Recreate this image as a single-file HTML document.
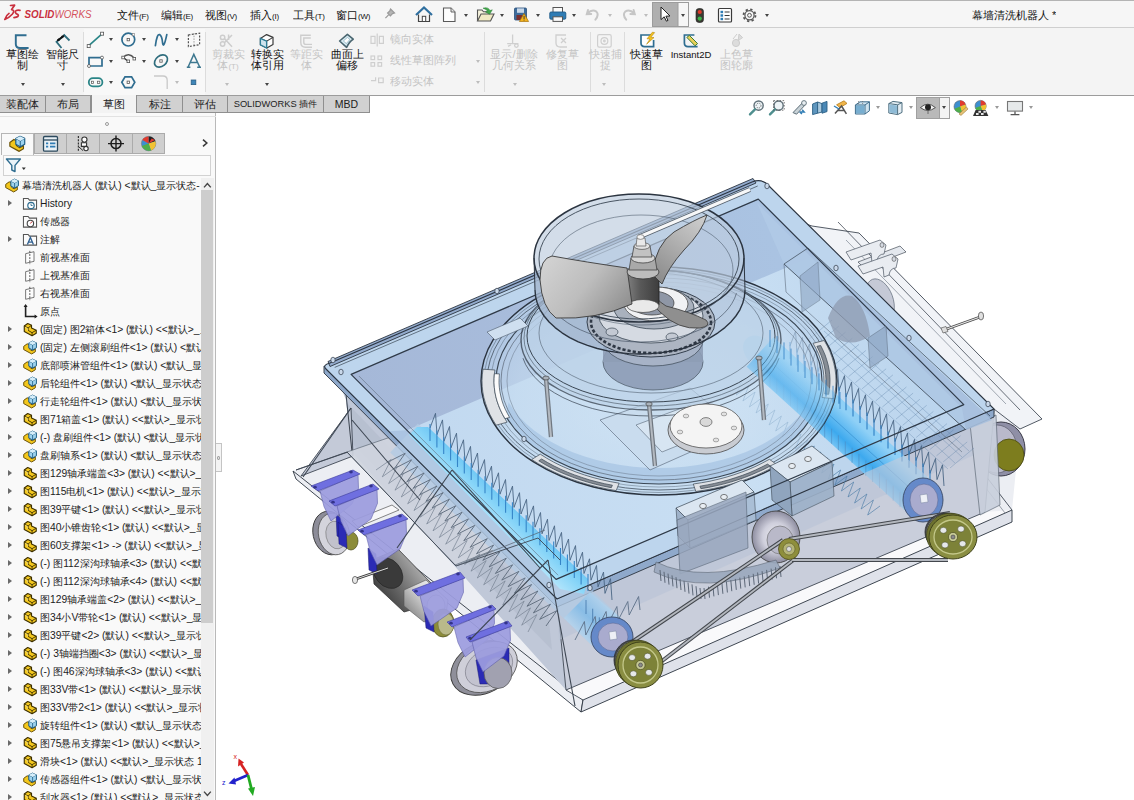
<!DOCTYPE html>
<html lang="zh">
<head>
<meta charset="utf-8">
<title>SOLIDWORKS</title>
<style>
*{box-sizing:border-box;margin:0;padding:0}
html,body{width:1134px;height:800px;overflow:hidden;background:#fff;font-family:"Liberation Sans",sans-serif;color:#1a1a1a}
#app{position:relative;width:1134px;height:800px;overflow:hidden;background:#fff}
.abs{position:absolute}
#topbar{position:absolute;left:0;top:0;width:1134px;height:28px;background:#f6f6f6;border-top:1px solid #b4b4b4;border-bottom:1px solid #cfcfcf}
#ribbon{position:absolute;left:0;top:28px;width:1134px;height:68px;background:#f4f4f4;border-bottom:1px solid #9c9c9c}
.sep{position:absolute;top:32px;width:1px;height:60px;background:#dcdcdc}
.tab{position:absolute;top:96px;height:17px;background:#d1d1d1;border-right:1px solid #8f8f8f;border-bottom:1px solid #8f8f8f;font-size:10.5px;line-height:16px;text-align:center;color:#222;white-space:nowrap;overflow:hidden}
.tab.act{background:#f3f3f3;border-bottom:none;top:95px;height:19px;line-height:18px;border-left:1px solid #8f8f8f}
.menu{position:absolute;top:8px;height:14px;font-size:11px;line-height:14px;color:#111;white-space:nowrap;overflow:hidden}
.menu i{font-style:normal;font-size:8px;letter-spacing:-0.2px}
.rl{position:absolute;font-size:11px;line-height:11px;height:11px;text-align:center;color:#111;white-space:nowrap;overflow:hidden}
.rl.dis{color:#c4c4c4}
.dd{position:absolute;width:0;height:0;border-left:2.5px solid transparent;border-right:2.5px solid transparent;border-top:3px solid #444}
.dd.dis{border-top-color:#bdbdbd}
.ico{position:absolute;overflow:visible}
#left{position:absolute;left:0;top:113px;width:216px;height:687px;background:#f9f9f9;border-right:1px solid #b9b9b9}
.row{position:absolute;left:0;width:201px;height:18px;font-size:10.3px;line-height:18px;white-space:nowrap;overflow:hidden;color:#1c1c1c}
.row b{position:absolute;left:40px;top:0;font-weight:normal}
.arr{position:absolute;left:8px;top:5px;width:0;height:0;border-top:3.5px solid transparent;border-bottom:3.5px solid transparent;border-left:4px solid #6a6a6a}
</style>
</head>
<body>
<div id="app">
<div id="topbar"></div>
<div id="ribbon"></div>
<!-- logo -->
<svg class="ico" style="left:0;top:0" width="100" height="28" viewBox="0 0 100 28">
 <g fill="none" stroke="#c9303e" stroke-width="1.7" stroke-linecap="round" stroke-linejoin="round">
  <path d="M10.5 5.5 L14.6 5.2 L11.6 9.6 Q15.5 10.2 12.2 14.2 Q9 17.8 4.8 19.4 Q6.2 15.2 9 13.4"/>
  <path d="M20 10.3 Q15 9.6 15.3 12.3 Q15.7 14 18 14.6 Q19.6 16.8 14 17.6"/>
 </g>
 <text x="24.5" y="18.4" font-family="Liberation Sans, sans-serif" font-size="10.4" font-style="italic" fill="#c9303e" textLength="67" lengthAdjust="spacingAndGlyphs"><tspan font-weight="bold">SOLID</tspan><tspan fill="#d4525c">WORKS</tspan></text>
</svg>
<div class="menu" style="left:117px;width:33px">文件<i>(F)</i></div>
<div class="menu" style="left:161px;width:33px">编辑<i>(E)</i></div>
<div class="menu" style="left:205px;width:34px">视图<i>(V)</i></div>
<div class="menu" style="left:250px;width:30px">插入<i>(I)</i></div>
<div class="menu" style="left:293px;width:32px">工具<i>(T)</i></div>
<div class="menu" style="left:336px;width:37px">窗口<i>(W)</i></div>
<div class="menu" style="left:972px;width:84px">幕墙清洗机器人 *</div>
<svg class="ico" style="left:380px;top:0" width="400" height="28" viewBox="380 0 400 28">
 <!-- pin -->
 <g stroke="#9a9a9a" stroke-width="1.2" fill="#b5b5b5"><path d="M390.5 9 L394.5 13 L392.5 13.6 L390.4 15.8 L387.6 13 L389.8 10.9 Z"/><path d="M388.8 14.6 L385.4 18.2" fill="none"/></g>
 <!-- home -->
 <path d="M416 15 L424 7.5 L432 15" fill="none" stroke="#2f6f9f" stroke-width="2.2" stroke-linejoin="miter"/>
 <path d="M418.5 14.5 V21.5 H429.5 V14.5" fill="#f4f4f4" stroke="#444" stroke-width="1.2"/>
 <rect x="422.3" y="16.3" width="3.4" height="5.2" fill="#fff" stroke="#444" stroke-width="1"/>
 <!-- new -->
 <path d="M443.5 8 H451 L455 12 V21.5 H443.5 Z" fill="#fdfdfd" stroke="#5a5a5a" stroke-width="1.1"/>
 <path d="M451 8 V12 H455" fill="#e4e4e4" stroke="#5a5a5a" stroke-width="0.9"/>
 <!-- open -->
 <path d="M477.5 21 V10 H482 L483.5 11.8 H489 V14" fill="#f5f2dc" stroke="#555" stroke-width="1.1"/>
 <path d="M477.5 21 L481 14 H494 L490.5 21 Z" fill="#efe9c4" stroke="#555" stroke-width="1.1"/>
 <path d="M483 8.2 Q488 6.5 490 10.5 L492.3 9.8 L489.6 14.3 L485.4 11.9 L487.6 11.2 Q486.5 9.2 483 8.2 Z" fill="#3fa84a" stroke="#2b7d33" stroke-width="0.5"/>
 <!-- save -->
 <rect x="514.5" y="8" width="12" height="12" rx="1" fill="#3d6c9c" stroke="#2a4f78" stroke-width="0.8"/>
 <rect x="517" y="8.4" width="7" height="4.4" fill="#c9d8e8"/>
 <rect x="516.5" y="15" width="6" height="5" fill="#7a2f2f"/>
 <path d="M524 13.5 L528.6 21.5 H519.4 Z" fill="#f3b21c" stroke="#a8720b" stroke-width="0.7"/>
 <rect x="523.6" y="16" width="0.9" height="3" fill="#333"/><rect x="523.6" y="19.6" width="0.9" height="0.9" fill="#333"/>
 <!-- print -->
 <rect x="553" y="7.5" width="9.5" height="5" fill="#fafafa" stroke="#555" stroke-width="1"/>
 <rect x="549.8" y="12" width="16" height="7.2" rx="1.2" fill="#2f7cb4" stroke="#1d5a88" stroke-width="0.9"/>
 <rect x="553" y="16.8" width="9.5" height="4.6" fill="#fafafa" stroke="#555" stroke-width="1"/>
 <!-- undo / redo disabled -->
 <path d="M588 10 L586.8 14.2 L591.2 14 M587.4 13.6 Q592 8.6 596.4 11.6 Q599.4 14.6 595.4 19.6" fill="none" stroke="#c6c6c6" stroke-width="2" stroke-linecap="round"/>
 <path d="M633.6 10 L634.8 14.2 L630.4 14 M634.2 13.6 Q629.6 8.6 625.2 11.6 Q622.2 14.6 626.2 19.6" fill="none" stroke="#c6c6c6" stroke-width="2" stroke-linecap="round"/>
 <!-- select -->
 <rect x="652.5" y="2.5" width="36" height="24" fill="#f6f6f6" stroke="#9c9c9c" stroke-width="1"/>
 <rect x="652.5" y="2.5" width="25.5" height="24" fill="#afafaf" stroke="#9c9c9c" stroke-width="1"/>
 <path d="M661 7 V19.6 L664.2 16.8 L666.4 21.2 L668 20.4 L665.9 16.2 L670 16 Z" fill="#fff" stroke="#222" stroke-width="1"/>
 <!-- traffic light -->
 <rect x="696" y="8.5" width="7.5" height="14" rx="3" fill="#3a3a32" stroke="#222" stroke-width="0.6"/>
 <circle cx="699.75" cy="12" r="2.1" fill="#e03a2a"/><circle cx="699.75" cy="18.6" r="2.1" fill="#3eb44a"/>
 <!-- options list -->
 <rect x="718.5" y="8.5" width="13" height="13.5" rx="1" fill="#fff" stroke="#3a3a3a" stroke-width="1.2"/>
 <rect x="720.5" y="10.8" width="2.6" height="2.4" fill="#2f7cb4"/><rect x="720.5" y="14.3" width="2.6" height="2.4" fill="#2f7cb4"/><rect x="720.5" y="17.8" width="2.6" height="2.4" fill="#2f7cb4"/>
 <path d="M724.6 12 H729.6 M724.6 15.5 H729.6 M724.6 19 H729.6" stroke="#3a3a3a" stroke-width="1.1"/>
 <!-- gear -->
 <circle cx="749.5" cy="15.3" r="4.6" fill="none" stroke="#555" stroke-width="1.2"/>
 <circle cx="749.5" cy="15.3" r="6" fill="none" stroke="#555" stroke-width="1.8" stroke-dasharray="2.3 2.41"/>
 <circle cx="749.5" cy="15.3" r="1.9" fill="none" stroke="#555" stroke-width="1"/>
</svg>
<div class="dd" style="left:464px;top:14px"></div>
<div class="dd" style="left:500px;top:14px"></div>
<div class="dd" style="left:536px;top:14px"></div>
<div class="dd" style="left:572px;top:14px"></div>
<div class="dd dis" style="left:608px;top:14px"></div>
<div class="dd dis" style="left:644px;top:14px"></div>
<div class="dd" style="left:680.5px;top:14px"></div>
<div class="dd" style="left:765px;top:14px"></div>
<div class="abs" style="left:84px;top:29px;width:121px;height:66px;background:#f8f8f8"></div>
<div class="sep" style="left:83px"></div><div class="sep" style="left:205px"></div><div class="sep" style="left:484px"></div><div class="sep" style="left:590px"></div><div class="sep" style="left:624px"></div>
<div class="rl" style="left:5px;top:49px;width:34px">草图绘</div><div class="rl" style="left:5px;top:60px;width:34px">制</div>
<div class="rl" style="left:45px;top:49px;width:34px">智能尺</div><div class="rl" style="left:45px;top:60px;width:34px">寸</div>
<div class="rl dis" style="left:211px;top:49px;width:34px">剪裁实</div><div class="rl dis" style="left:211px;top:60px;width:34px">体<span style="font-size:8px">(T)</span></div>
<div class="rl" style="left:250px;top:49px;width:34px">转换实</div><div class="rl" style="left:250px;top:60px;width:34px">体引用</div>
<div class="rl dis" style="left:289px;top:49px;width:34px">等距实</div><div class="rl dis" style="left:289px;top:60px;width:34px">体</div>
<div class="rl" style="left:330px;top:49px;width:34px">曲面上</div><div class="rl" style="left:330px;top:60px;width:34px">偏移</div>
<div class="rl dis" style="left:390px;top:34px;width:44px;text-align:left">镜向实体</div>
<div class="rl dis" style="left:390px;top:55px;width:66px;text-align:left">线性草图阵列</div>
<div class="rl dis" style="left:390px;top:76px;width:44px;text-align:left">移动实体</div>
<div class="rl dis" style="left:488px;top:49px;width:52px">显示/删除</div><div class="rl dis" style="left:488px;top:60px;width:52px">几何关系</div>
<div class="rl dis" style="left:544px;top:49px;width:36px">修复草</div><div class="rl dis" style="left:544px;top:60px;width:36px">图</div>
<div class="rl dis" style="left:588px;top:49px;width:34px">快速捕</div><div class="rl dis" style="left:588px;top:60px;width:34px">捉</div>
<div class="rl" style="left:629px;top:49px;width:34px">快速草</div><div class="rl" style="left:629px;top:60px;width:34px">图</div>
<div class="rl" style="left:668px;top:49px;width:46px;font-size:9.5px">Instant2D</div>
<div class="rl dis" style="left:719px;top:49px;width:34px">上色草</div><div class="rl dis" style="left:719px;top:60px;width:34px">图轮廓</div>
<div class="dd" style="left:20.5px;top:83px"></div><div class="dd" style="left:60.5px;top:83px"></div>
<div class="dd dis" style="left:224.5px;top:83px"></div><div class="dd" style="left:265px;top:83px"></div>
<div class="dd dis" style="left:513px;top:83px"></div><div class="dd dis" style="left:601.5px;top:83px"></div>
<div class="dd dis" style="left:476px;top:60px"></div><div class="dd dis" style="left:476px;top:81px"></div>
<div class="dd" style="left:109px;top:38px"></div><div class="dd" style="left:109px;top:59.5px"></div><div class="dd" style="left:109px;top:80.5px"></div>
<div class="dd" style="left:141.5px;top:38px"></div><div class="dd" style="left:141.5px;top:59.5px"></div>
<div class="dd" style="left:174.5px;top:38px"></div><div class="dd" style="left:174.5px;top:59.5px"></div><div class="dd dis" style="left:174.5px;top:80.5px"></div>
<svg class="ico" style="left:0;top:28px" width="780" height="68" viewBox="0 28 780 68">
 <!-- sketch -->
 <path d="M26.5 35.2 H15.8 V44 Q15.8 48 20 48 H28.6" fill="none" stroke="#2f6d90" stroke-width="1.9"/>
 <!-- smart dimension -->
 <path d="M65 35 L56.5 41.8 L61.5 48" fill="none" stroke="#2f6d7d" stroke-width="1.8"/>
 <path d="M63.5 34.5 L69.5 40.5" fill="none" stroke="#2f6d7d" stroke-width="1.8"/>
 <path d="M57.5 40.5 L63.5 36" stroke="#111" stroke-width="1.6"/><path d="M56.6 41.2 l3.4 -0.6 l-1.7 -2.3 z M64.4 35.3 l-3.4 0.6 l1.7 2.3 z" fill="#111"/>
 <!-- line -->
 <path d="M88.8 45.6 L102 33.8" stroke="#2a8587" stroke-width="1.6"/><rect x="87.2" y="44.6" width="3" height="3" fill="#fff" stroke="#555" stroke-width="0.8"/><rect x="100.6" y="32.2" width="3" height="3" fill="#fff" stroke="#555" stroke-width="0.8"/>
 <!-- rect -->
 <path d="M89 66 V57.6 H102 V66 Z" fill="none" stroke="#2f6d90" stroke-width="1.7"/><circle cx="89" cy="66" r="1.5" fill="#fff" stroke="#555" stroke-width="0.8"/><circle cx="102" cy="57.6" r="1.5" fill="#fff" stroke="#555" stroke-width="0.8"/>
 <!-- slot -->
 <rect x="88.8" y="78.2" width="13.6" height="8.2" rx="4.1" fill="none" stroke="#2a8587" stroke-width="1.8"/><rect x="91.4" y="81.2" width="2.2" height="2.2" fill="#fff" stroke="#555" stroke-width="0.7"/><rect x="97.6" y="81.2" width="2.2" height="2.2" fill="#fff" stroke="#555" stroke-width="0.7"/>
 <!-- circle -->
 <circle cx="128.3" cy="39.6" r="6.4" fill="none" stroke="#2f6d90" stroke-width="1.7"/><rect x="127.1" y="38.4" width="2.4" height="2.4" fill="#fff" stroke="#555" stroke-width="0.8"/><rect x="132.2" y="33.6" width="2.2" height="2.2" fill="#fff" stroke="#777" stroke-width="0.6"/>
 <!-- arc -->
 <path d="M123 57.6 Q128.5 51.6 134.6 58.4" fill="none" stroke="#555" stroke-width="1.5"/><path d="M123.4 57.4 L128 61.2" stroke="#333" stroke-width="1.3"/><rect x="121.8" y="56.2" width="2.6" height="2.6" fill="#fff" stroke="#555" stroke-width="0.8"/><rect x="127" y="60" width="2.6" height="2.6" fill="#fff" stroke="#555" stroke-width="0.8"/><rect x="133" y="57.4" width="2.6" height="2.6" fill="#fff" stroke="#555" stroke-width="0.8"/>
 <!-- hexagon -->
 <path d="M121.8 82.3 L125 76.9 H131.6 L134.8 82.3 L131.6 87.7 H125 Z" fill="none" stroke="#2f6d90" stroke-width="1.7"/><rect x="127.1" y="81.1" width="2.4" height="2.4" fill="#fff" stroke="#555" stroke-width="0.8"/>
 <!-- spline -->
 <path d="M155.4 45.6 Q157 33.6 159.6 34.6 Q162 36 162.6 43 Q163.6 49.6 166.8 34.6" fill="none" stroke="#2f6d90" stroke-width="1.7" stroke-linecap="round"/>
 <!-- ellipse -->
 <ellipse cx="161" cy="61" rx="7.2" ry="5.2" transform="rotate(-38 161 61)" fill="none" stroke="#2f6d7d" stroke-width="1.7"/><rect x="159.8" y="59.8" width="2.4" height="2.4" fill="#fff" stroke="#555" stroke-width="0.8"/>
 <!-- fillet disabled -->
 <path d="M154 76 H163 Q167.2 76 167.2 80.4 V89" fill="none" stroke="#c9c9c9" stroke-width="1.3"/>
 <!-- construction -->
 <path d="M188.4 35 L199.6 33.2 V44.6 L188.4 46.6 Z" fill="none" stroke="#555" stroke-width="1.2" stroke-dasharray="2 1.4"/><path d="M194 33 V47" stroke="#888" stroke-width="0.8" stroke-dasharray="1.5 1.2"/>
 <!-- text A -->
 <path d="M188 67.2 L193.8 54.4 L199.8 67.2 M190.4 62.6 H197.2 M186.8 67.2 H190.4 M197.2 67.2 H201" fill="none" stroke="#3e7890" stroke-width="1.5"/>
 <!-- point -->
 <rect x="191.2" y="80" width="4.6" height="4.6" fill="#3f86b8" stroke="#2a5f85" stroke-width="0.8"/>
 <!-- trim disabled -->
 <g fill="none" stroke="#cdcdcd" stroke-width="1.5"><circle cx="222.6" cy="37.4" r="2.2"/><circle cx="222.6" cy="44" r="2.2"/><path d="M224.6 38.8 L232 46.8 M224.6 42.6 L232 35 M228.6 34.6 V40"/></g>
 <!-- convert cube -->
 <path d="M260.4 38.4 L266.6 34.6 L273 37.4 V44.4 L266.8 48 L260.4 44.8 Z" fill="#fdfdfd" stroke="#3a3a3a" stroke-width="1.2" stroke-linejoin="round"/>
 <path d="M260.4 38.4 L266.6 41.2 L273 37.4 M266.6 41.2 V48" fill="none" stroke="#3a3a3a" stroke-width="1.1"/>
 <path d="M260.4 38.4 L266.6 41.2 V48 L260.4 44.8 Z" fill="#cfe4ee" stroke="#2f7d96" stroke-width="1.3"/>
 <!-- offset disabled -->
 <path d="M310.8 35.2 H300.8 V42.6 Q300.8 47.2 305.4 47.2 H312 M310.8 38 H303.8 V42.4 Q303.8 44.4 306 44.4 H312" fill="none" stroke="#cdcdcd" stroke-width="1.4"/>
 <!-- surface offset -->
 <path d="M339.6 41 L347.4 34.4 L353.2 39.2 Q349.4 41.4 346.6 47.4 Z" fill="#d9ecf3" stroke="#4a6670" stroke-width="1.6" stroke-linejoin="round"/>
 <path d="M343.4 41 L347.4 37.4 L350 39.6 Q348 41 346.4 43.6 Z" fill="#fff" stroke="#7fa9b8" stroke-width="0.7"/>
 <!-- mirror / pattern / move (disabled) -->
 <g fill="none" stroke="#cfcfcf" stroke-width="1.2"><path d="M371 36.4 h4 v7 h-4 z M379.4 36.4 h4 v7 h-4 z M377.2 33.4 V46.4"/>
 <rect x="371" y="56" width="3.6" height="3.6"/><rect x="378" y="56" width="3.6" height="3.6"/><rect x="371" y="62.6" width="3.6" height="3.6"/><rect x="378" y="62.6" width="3.6" height="3.6"/>
 <path d="M371 80.6 h4.6 v-3.4 M378.6 78 h4.6 v4.6 h-4.6 z"/></g>
 <!-- display/delete relations disabled -->
 <g fill="none" stroke="#cfcfcf" stroke-width="1.3"><path d="M512.6 34.4 V43.4 M507.2 43.6 H518.4"/><circle cx="516.4" cy="45.6" r="1.8"/><path d="M508 46.4 l3 -1.6"/></g>
 <!-- repair sketch disabled -->
 <g fill="none" stroke="#cfcfcf" stroke-width="1.3"><path d="M566 35 H556 V43 Q556 47 560.4 47 H567"/><path d="M561 38 l5 5 M566 38 l-5 5"/></g>
 <!-- quick snaps disabled -->
 <g fill="none" stroke="#cfcfcf" stroke-width="1.2"><rect x="597.6" y="34.6" width="13.6" height="12.6" rx="1.6"/><circle cx="604.4" cy="41" r="3.4"/><circle cx="604.4" cy="41" r="0.8"/></g>
 <!-- rapid sketch -->
 <path d="M651 35 H641 V43 Q641 46.6 644.6 46.6 H653.6 V40" fill="#fff" stroke="#2f6d90" stroke-width="1.7"/>
 <path d="M652.4 32.2 L647 38.8 L650 39 L646.6 44.2 L654 37.6 L650.8 37.2 L654.6 32.6 Z" fill="#f4c21f" stroke="#b58508" stroke-width="0.6"/>
 <!-- instant2d -->
 <path d="M694.4 35 H684.4 V43 Q684.4 46.6 688 46.6 H697.6" fill="none" stroke="#2f6d90" stroke-width="1.7"/>
 <path d="M686.8 37.4 L689.4 35.4 L697.6 43.6 L695 45.8 Z" fill="#e9cf57" stroke="#3a7d3a" stroke-width="1"/>
 <!-- shaded sketch contours disabled -->
 <g fill="#dcdcdc" stroke="#cdcdcd" stroke-width="1"><circle cx="736" cy="43" r="3.6"/><path d="M739 34 l3.6 3.6 l-4.4 3 z"/><path d="M733 39 l4 -5"/></g>
</svg>
<div class="tab" style="left:0;width:46px">装配体</div>
<div class="tab" style="left:46px;width:45px">布局</div>
<div class="tab act" style="left:91px;width:46px">草图</div>
<div class="tab" style="left:137px;width:46px">标注</div>
<div class="tab" style="left:183px;width:45px">评估</div>
<div class="tab" style="left:228px;width:96px;font-size:9.3px">SOLIDWORKS 插件</div>
<div class="tab" style="left:324px;width:46px">MBD</div>
<svg class="ico" style="left:740px;top:94px" width="300" height="30" viewBox="740 94 300 30">
 <!-- zoom to fit -->
 <circle cx="758.6" cy="105.6" r="4.6" fill="#eef4f7" stroke="#5f6f78" stroke-width="1.4"/><path d="M755 109.4 L750 114.4" stroke="#4f8f8f" stroke-width="2.4" stroke-linecap="round"/><circle cx="758.6" cy="105.6" r="2.4" fill="none" stroke="#444" stroke-width="0.8" stroke-dasharray="1 1.2"/>
 <!-- zoom area -->
 <circle cx="778.6" cy="105.6" r="4.6" fill="#eef4f7" stroke="#5f6f78" stroke-width="1.4"/><path d="M775 109.4 L770 114.4" stroke="#4f8f8f" stroke-width="2.4" stroke-linecap="round"/><rect x="773.6" y="100.6" width="10.6" height="9.6" fill="none" stroke="#555" stroke-width="0.8" stroke-dasharray="1.5 1.5"/>
 <!-- previous view -->
 <path d="M793 112.6 L803.6 101.6 L806 104 L796.6 114.2 Z" fill="#c9d3d8" stroke="#5f6f78" stroke-width="1"/><circle cx="804" cy="103" r="2.4" fill="#e8eef1" stroke="#5f6f78" stroke-width="0.9"/><path d="M799.6 112 l4.6 0 l-2 -2.2 M799.6 112 l2.4 2" fill="none" stroke="#2f7cb4" stroke-width="1.4"/>
 <!-- section view -->
 <path d="M812.6 104 L817.6 102 V113.2 L812.6 114.6 Z" fill="#5f96be" stroke="#2a5f85" stroke-width="0.9"/><path d="M817.6 102 L822 103.6 V112 L817.6 113.2 Z" fill="#a9c9de" stroke="#2a5f85" stroke-width="0.9"/><path d="M822 103.2 L827 101.4 V111.6 L822 113.2 Z" fill="#4a88b6" stroke="#2a5f85" stroke-width="0.9"/>
 <!-- dynamic annotation -->
 <path d="M836.6 104.8 L844 100.8 L847 103.4 L840 107.6 Z" fill="#f0b54a" stroke="#b57b1a" stroke-width="0.8"/><path d="M835 113.6 L841.6 106 L846.4 113.8 M838 110.4 H844.4" fill="none" stroke="#555" stroke-width="1.5"/><path d="M834 106 L839 109" stroke="#2f7cb4" stroke-width="1.4"/>
 <!-- view orientation -->
 <path d="M855.4 105 L860 101.8 H869.4 V110.8 L865 114 H855.4 Z" fill="#cfe3ef" stroke="#3e6d8c" stroke-width="1"/><path d="M855.4 105 H865 V114 M865 105 L869.4 101.8" fill="none" stroke="#3e6d8c" stroke-width="1"/><rect x="856" y="105.6" width="8.4" height="7.8" fill="#78aed0"/><path d="M858.6 101 V104.6 M862.6 101 V104.6" stroke="#666" stroke-width="0.7" stroke-dasharray="1 1"/>
 <!-- display style -->
 <path d="M888.8 103.6 L893 101.4 L902 102.6 V112.4 L897.6 114.6 L888.8 113 Z" fill="#e3edf3" stroke="#4f6f80" stroke-width="1"/><path d="M888.8 103.6 L897.6 104.8 V114.6 M897.6 104.8 L902 102.6" fill="none" stroke="#4f6f80" stroke-width="1"/><path d="M889.4 104.4 L897 105.4 V113.8 L889.4 112.4 Z" fill="#8fbbd6"/>
 <!-- hide/show box -->
 <rect x="916.5" y="97.5" width="33" height="21" fill="#f3f3f3" stroke="#a0a0a0" stroke-width="1"/><rect x="916.5" y="97.5" width="23" height="21" fill="#b9b9b9" stroke="#a0a0a0" stroke-width="1"/>
 <path d="M920.4 107.6 Q927.6 100.8 935.4 107.6 Q927.6 113.4 920.4 107.6 Z" fill="#f2f2f2" stroke="#444" stroke-width="0.9"/><circle cx="928" cy="107.2" r="3" fill="#222"/><path d="M928 110.4 V114" stroke="#555" stroke-width="0.8"/>
 <!-- edit appearance -->
 <circle cx="960" cy="106.6" r="6" fill="#3d8fd0" stroke="#666" stroke-width="0.6"/><path d="M960 106.6 L960 100.6 A6 6 0 0 1 965.6 104.6 Z" fill="#e23b2e"/><path d="M960 106.6 L965.6 104.6 A6 6 0 0 1 962 112.2 Z" fill="#f1c232"/><path d="M960 106.6 L962 112.2 A6 6 0 0 1 954.4 108.8 Z" fill="#4fae4a"/><path d="M959 114 L966.4 107 L968 109 L961 115.4 Z" fill="#e8c477" stroke="#9a7a3a" stroke-width="0.6"/>
 <!-- scene -->
 <circle cx="980.6" cy="106" r="5.6" fill="#3d8fd0" stroke="#666" stroke-width="0.6"/><path d="M980.6 106 L980.6 100.4 A5.6 5.6 0 0 1 986 104.4 Z" fill="#e23b2e"/><path d="M980.6 106 L986 104.4 A5.6 5.6 0 0 1 982.4 111.4 Z" fill="#f1c232"/><path d="M980.6 106 L982.4 111.4 A5.6 5.6 0 0 1 975.2 108 Z" fill="#4fae4a"/>
 <path d="M973 116 L975.6 110 H985.6 L988.4 116 Z" fill="#333"/><path d="M976 113 h2.6 v2 h-2.6 z M981 113 h2.6 v2 h-2.6 z M978.4 110.8 h2.6 v2 h-2.6 z M983.4 110.8 h2.4 v2 h-2.4 z" fill="#e6e6e6"/>
 <!-- monitor -->
 <rect x="1007.5" y="101.5" width="15" height="9.6" fill="#e6e9ea" stroke="#777" stroke-width="1.1"/><path d="M1015 111.4 V114.2 M1010.6 114.6 H1019.4" stroke="#555" stroke-width="1.3"/>
</svg>
<div class="dd dis" style="left:875.5px;top:106px;border-top-color:#999"></div>
<div class="dd dis" style="left:908.5px;top:106px;border-top-color:#999"></div>
<div class="dd" style="left:941.8px;top:106px"></div>
<div class="dd dis" style="left:994.5px;top:106px;border-top-color:#999"></div>
<div class="dd dis" style="left:1028.5px;top:106px;border-top-color:#999"></div>
<div id="left"></div>
<svg width="0" height="0" style="position:absolute">
 <defs>
  <symbol id="i-part" viewBox="0 0 16 16" overflow="visible"><path d="M1.4 4.4 L5.2 1.6 L9.4 3.6 V6.6 L14.6 9 V12.4 L10 15.2 L1.4 10.6 Z" fill="#f4c81e" stroke="#3d3000" stroke-width="1.25" stroke-linejoin="round"/><path d="M1.4 4.4 L5.6 6.6 L9.4 3.6 M5.6 6.6 V9.2 L10 11.8 L14.6 9 M10 11.8 V15.2" fill="none" stroke="#3d3000" stroke-width="1"/><path d="M2.4 5.8 L4.8 7.1 V9.6" fill="none" stroke="#fff0a0" stroke-width="0.8"/></symbol>
  <symbol id="i-asm" viewBox="0 0 16 16" overflow="visible"><path d="M0.8 7 L4.6 4.2 L7 5.4 V10 L10 12 L13.6 10 V13 L9.6 15.4 L0.8 10.6 Z" fill="#f3c71c" stroke="#6b5208" stroke-width="1.1" stroke-linejoin="round"/><path d="M6.4 3.4 L10.4 1.2 L14.8 3.2 V8.6 L10.6 11 L6.4 8.8 Z" fill="#9fd3ee" stroke="#1f5f86" stroke-width="1.1" stroke-linejoin="round"/><path d="M6.4 3.4 L10.6 5.6 L14.8 3.2 M10.6 5.6 V11" fill="none" stroke="#1f5f86" stroke-width="0.9"/><path d="M6.4 3.4 L10.4 1.2 L14.8 3.2 L10.6 5.6 Z" fill="#d7eefa"/></symbol>
  <symbol id="i-fold" viewBox="0 0 16 16" overflow="visible"><path d="M1 14 V2.6 H6 L7.4 4.4 H15 V14 Z" fill="#fbfbfb" stroke="#555" stroke-width="1.1"/></symbol>
  <symbol id="i-plane" viewBox="0 0 16 16" overflow="visible"><path d="M3 3.6 L12.6 1.4 V12.4 L3 14.6 Z" fill="#fdfdfd" stroke="#666" stroke-width="1"/><path d="M7.8 0.4 V15.6" stroke="#444" stroke-width="1" stroke-dasharray="2.2 1.4"/></symbol>
 </defs>
</svg>
<div class="abs" style="left:0;top:116px;width:216px;height:1px;background:#e2e2e2"></div>
<div class="abs" style="left:104.5px;top:121.5px;width:4px;height:4px;border:1px solid #9a9a9a;border-radius:50%"></div>
<div class="abs" style="left:1px;top:133px;width:33px;height:22px;background:#f9f9f9;border:1px solid #b5b5b5;border-bottom:none"></div>
<div class="abs" style="left:34px;top:133px;width:131px;height:21px;background:#cfcfcf;border:1px solid #ababab"></div>
<div class="abs" style="left:66px;top:133px;width:1px;height:21px;background:#ababab"></div>
<div class="abs" style="left:99px;top:133px;width:1px;height:21px;background:#ababab"></div>
<div class="abs" style="left:132px;top:133px;width:1px;height:21px;background:#ababab"></div>
<div class="abs" style="left:3px;top:155px;width:208px;height:21px;background:#fbfbfb;border:1px solid #d2d2d2"></div>
<svg class="ico" style="left:0;top:130px" width="216" height="50" viewBox="0 130 216 50">
 <use href="#i-asm" x="9" y="135" width="17" height="17"/>
 <rect x="43.5" y="136.5" width="14" height="14.6" rx="1.2" fill="#e9f1f6" stroke="#2c4a5e" stroke-width="1.3"/><path d="M43.5 140 H57.5" stroke="#2c4a5e" stroke-width="1.3"/><path d="M46 143.4 h2.2 M46 146.6 h2.2 M50 143.4 h5.4 M50 146.6 h5.4" stroke="#2f7cb4" stroke-width="1.6"/>
 <path d="M78.4 136 V151.6" stroke="#333" stroke-width="1.2" stroke-dasharray="2 1.2"/><circle cx="84.4" cy="139.6" r="2.6" fill="#fff" stroke="#333" stroke-width="1.1"/><path d="M81.4 142.8 h5.2 v3.6 h-5.2 z" fill="#fff" stroke="#333" stroke-width="1.1"/><circle cx="86" cy="148.6" r="2.2" fill="#fff" stroke="#333" stroke-width="1.1"/><path d="M79 147 L83 150.6" stroke="#333" stroke-width="1"/>
 <circle cx="116" cy="143.6" r="5" fill="none" stroke="#1d1d1d" stroke-width="1.5"/><path d="M116 135.6 V151.6 M108 143.6 H124" stroke="#1d1d1d" stroke-width="1.4"/>
 <circle cx="148.6" cy="143.6" r="7.2" fill="#3d8fd0" stroke="#777" stroke-width="0.6"/><path d="M148.6 143.6 L148.6 136.4 A7.2 7.2 0 0 1 155.4 141.2 Z" fill="#222"/><path d="M148.6 143.6 L142.4 140 A7.2 7.2 0 0 1 148.6 136.4 Z" fill="#e23b2e"/><path d="M148.6 143.6 L155.4 141.2 A7.2 7.2 0 0 1 151 150.4 Z" fill="#f1c232"/><path d="M148.6 143.6 L151 150.4 A7.2 7.2 0 0 1 141.8 146 Z" fill="#4fae4a"/><path d="M148.6 143.6 L155 140 L151.6 138.4 Z" fill="#e23b2e"/>
 <path d="M203 139.6 L206.8 143 L203 146.4" fill="none" stroke="#3a3a3a" stroke-width="1.6"/>
 <path d="M6.4 159 H20.4 L15 165.4 V171.6 L11.8 170 V165.4 Z" fill="#eaf3f8" stroke="#2f6d90" stroke-width="1.4" stroke-linejoin="round"/><path d="M21.8 167.6 h4 l-2 2.4 z" fill="#333"/>
</svg>
<div class="abs" style="left:201px;top:178px;width:13px;height:622px;background:#f0f0f0"></div>
<div class="abs" style="left:201px;top:190px;width:12px;height:433px;background:#cdcdcd"></div>
<svg class="ico" style="left:201px;top:178px" width="14" height="622" viewBox="201 178 14 622"><path d="M204 187.4 L207.4 183.6 L210.8 187.4" fill="none" stroke="#444" stroke-width="1.4"/><path d="M204 791.6 L207.4 795.4 L210.8 791.6" fill="none" stroke="#444" stroke-width="1.4"/></svg>
<div class="row" style="top:176.5px;width:200px"><b style="left:22px">幕墙清洗机器人 (默认) &lt;默认_显示状态-1</b></div>
<div class="row" style="top:194.5px"><i class="arr"></i><b>History</b></div>
<div class="row" style="top:212.5px"><b>传感器</b></div>
<div class="row" style="top:230.5px"><i class="arr"></i><b>注解</b></div>
<div class="row" style="top:248.5px"><b>前视基准面</b></div>
<div class="row" style="top:266.5px"><b>上视基准面</b></div>
<div class="row" style="top:284.5px"><b>右视基准面</b></div>
<div class="row" style="top:302.5px"><b>原点</b></div>
<div class="row" style="top:320.5px"><i class="arr"></i><b>(固定) 图2箱体&lt;1&gt; (默认) &lt;&lt;默认&gt;_显示</b></div>
<div class="row" style="top:338.5px"><i class="arr"></i><b>(固定) 左侧滚刷组件&lt;1&gt; (默认) &lt;默认_显</b></div>
<div class="row" style="top:356.5px"><i class="arr"></i><b>底部喷淋管组件&lt;1&gt; (默认) &lt;默认_显示状</b></div>
<div class="row" style="top:374.5px"><i class="arr"></i><b>后轮组件&lt;1&gt; (默认) &lt;默认_显示状态-1&gt;</b></div>
<div class="row" style="top:392.5px"><i class="arr"></i><b>行走轮组件&lt;1&gt; (默认) &lt;默认_显示状态</b></div>
<div class="row" style="top:410.5px"><i class="arr"></i><b>图71箱盖&lt;1&gt; (默认) &lt;&lt;默认&gt;_显示状态</b></div>
<div class="row" style="top:428.5px"><i class="arr"></i><b>(-) 盘刷组件&lt;1&gt; (默认) &lt;默认_显示状态</b></div>
<div class="row" style="top:446.5px"><i class="arr"></i><b>盘刷轴系&lt;1&gt; (默认) &lt;默认_显示状态-1&gt;</b></div>
<div class="row" style="top:464.5px"><i class="arr"></i><b>图129轴承端盖&lt;3&gt; (默认) &lt;&lt;默认&gt;_显</b></div>
<div class="row" style="top:482.5px"><i class="arr"></i><b>图115电机&lt;1&gt; (默认) &lt;&lt;默认&gt;_显示状</b></div>
<div class="row" style="top:500.5px"><i class="arr"></i><b>图39平键&lt;1&gt; (默认) &lt;&lt;默认&gt;_显示状态</b></div>
<div class="row" style="top:518.5px"><i class="arr"></i><b>图40小锥齿轮&lt;1&gt; (默认) &lt;&lt;默认&gt;_显示</b></div>
<div class="row" style="top:536.5px"><i class="arr"></i><b>图60支撑架&lt;1&gt; -&gt; (默认) &lt;&lt;默认&gt;_显</b></div>
<div class="row" style="top:554.5px"><i class="arr"></i><b>(-) 图112深沟球轴承&lt;3&gt; (默认) &lt;&lt;默认</b></div>
<div class="row" style="top:572.5px"><i class="arr"></i><b>(-) 图112深沟球轴承&lt;4&gt; (默认) &lt;&lt;默认</b></div>
<div class="row" style="top:590.5px"><i class="arr"></i><b>图129轴承端盖&lt;2&gt; (默认) &lt;&lt;默认&gt;_显</b></div>
<div class="row" style="top:608.5px"><i class="arr"></i><b>图34小V带轮&lt;1&gt; (默认) &lt;&lt;默认&gt;_显示</b></div>
<div class="row" style="top:626.5px"><i class="arr"></i><b>图39平键&lt;2&gt; (默认) &lt;&lt;默认&gt;_显示状态</b></div>
<div class="row" style="top:644.5px"><i class="arr"></i><b>(-) 3轴端挡圈&lt;3&gt; (默认) &lt;&lt;默认&gt;_显</b></div>
<div class="row" style="top:662.5px"><i class="arr"></i><b>(-) 图46深沟球轴承&lt;3&gt; (默认) &lt;&lt;默认</b></div>
<div class="row" style="top:680.5px"><i class="arr"></i><b>图33V带&lt;1&gt; (默认) &lt;&lt;默认&gt;_显示状态</b></div>
<div class="row" style="top:698.5px"><i class="arr"></i><b>图33V带2&lt;1&gt; (默认) &lt;&lt;默认&gt;_显示状</b></div>
<div class="row" style="top:716.5px"><i class="arr"></i><b>旋转组件&lt;1&gt; (默认) &lt;默认_显示状态-1&gt;</b></div>
<div class="row" style="top:734.5px"><i class="arr"></i><b>图75悬吊支撑架&lt;1&gt; (默认) &lt;&lt;默认&gt;_</b></div>
<div class="row" style="top:752.5px"><i class="arr"></i><b>滑块&lt;1&gt; (默认) &lt;&lt;默认&gt;_显示状态 1&gt;</b></div>
<div class="row" style="top:770.5px"><i class="arr"></i><b>传感器组件&lt;1&gt; (默认) &lt;默认_显示状态</b></div>
<div class="row" style="top:788.5px"><i class="arr"></i><b>刮水器&lt;1&gt; (默认) &lt;&lt;默认&gt;_显示状态</b></div>
<svg class="ico" style="left:0;top:176px" width="60" height="624" viewBox="0 176 60 624"><use href="#i-asm" x="5" y="178.0" width="14.5" height="14.5"/><use href="#i-fold" x="22.5" y="196.0" width="15" height="15"/><circle cx="31" cy="205.5" r="3.2" fill="#fff" stroke="#2f6d90" stroke-width="1.2"/><path d="M31 203.5 v2 h1.6" stroke="#2f6d90" stroke-width="0.9" fill="none"/><use href="#i-fold" x="22.5" y="214.0" width="15" height="15"/><circle cx="30.4" cy="223.5" r="3.2" fill="#fff" stroke="#444" stroke-width="1.1"/><path d="M30.4 223.5 l1.6 -2" stroke="#c33" stroke-width="1" fill="none"/><use href="#i-fold" x="22.5" y="232.0" width="15" height="15"/><path d="M27.4 244.5 L30.4 237.5 L33.4 244.5 M28.6 242.1 H32.2" stroke="#2f5f90" stroke-width="1.3" fill="none"/><use href="#i-plane" x="23" y="250.5" width="14" height="14"/><use href="#i-plane" x="23" y="268.5" width="14" height="14"/><use href="#i-plane" x="23" y="286.5" width="14" height="14"/><path d="M25.6 305.5 V316.5 H36" fill="none" stroke="#222" stroke-width="1.6"/><path d="M25.6 303.9 l-2 3 h4 z M37.6 316.5 l-3 -2 v4 z" fill="#222"/><use href="#i-part" x="23" y="322.0" width="14.5" height="14.5"/><use href="#i-asm" x="23" y="340.0" width="14.5" height="14.5"/><use href="#i-asm" x="23" y="358.0" width="14.5" height="14.5"/><use href="#i-asm" x="23" y="376.0" width="14.5" height="14.5"/><use href="#i-asm" x="23" y="394.0" width="14.5" height="14.5"/><use href="#i-part" x="23" y="412.0" width="14.5" height="14.5"/><use href="#i-asm" x="23" y="430.0" width="14.5" height="14.5"/><use href="#i-asm" x="23" y="448.0" width="14.5" height="14.5"/><use href="#i-part" x="23" y="466.0" width="14.5" height="14.5"/><use href="#i-part" x="23" y="484.0" width="14.5" height="14.5"/><use href="#i-part" x="23" y="502.0" width="14.5" height="14.5"/><use href="#i-part" x="23" y="520.0" width="14.5" height="14.5"/><use href="#i-part" x="23" y="538.0" width="14.5" height="14.5"/><use href="#i-part" x="23" y="556.0" width="14.5" height="14.5"/><use href="#i-part" x="23" y="574.0" width="14.5" height="14.5"/><use href="#i-part" x="23" y="592.0" width="14.5" height="14.5"/><use href="#i-part" x="23" y="610.0" width="14.5" height="14.5"/><use href="#i-part" x="23" y="628.0" width="14.5" height="14.5"/><use href="#i-part" x="23" y="646.0" width="14.5" height="14.5"/><use href="#i-part" x="23" y="664.0" width="14.5" height="14.5"/><use href="#i-part" x="23" y="682.0" width="14.5" height="14.5"/><use href="#i-part" x="23" y="700.0" width="14.5" height="14.5"/><use href="#i-asm" x="23" y="718.0" width="14.5" height="14.5"/><use href="#i-part" x="23" y="736.0" width="14.5" height="14.5"/><use href="#i-part" x="23" y="754.0" width="14.5" height="14.5"/><use href="#i-asm" x="23" y="772.0" width="14.5" height="14.5"/><use href="#i-part" x="23" y="790.0" width="14.5" height="14.5"/></svg>
<div class="abs" style="left:216px;top:443px;width:6px;height:29px;background:#f4f4f4;border:1px solid #c4c4c4;border-left:none"></div>
<div class="abs" style="left:216.5px;top:456px;width:3px;height:4px;border:1px solid #9a9a9a;border-radius:50%"></div>
<svg id="model" class="abs" style="left:216px;top:113px" width="918" height="687" viewBox="216 113 918 687">
<polygon points="293.0,471.0 347.0,453.0 350.0,408.0 760.0,210.0 812.0,230.0 859.0,233.0 1042.0,419.0 1020.0,429.0 1012.0,510.0 1012.0,522.0 581.0,712.0 296.0,479.0" fill="#eceef3" stroke="none" stroke-width="1" stroke-linejoin="round" />
<polygon points="812.0,226.0 859.0,233.0 1042.0,419.0 1020.0,429.0 994.0,409.0 800.0,222.0" fill="#f1f3f7" stroke="#2b3440" stroke-width="0.8" stroke-linejoin="round" />
<line x1="838.0" y1="222.0" x2="1020.0" y2="410.0" stroke="#2b3440" stroke-width="0.7" />
<line x1="846.0" y1="240.0" x2="1006.0" y2="404.0" stroke="#6a7482" stroke-width="0.6" />
<polygon points="858.0,262.0 900.0,246.0 906.0,252.0 864.0,268.0" fill="#e4e8ee" stroke="#2b3440" stroke-width="0.6" stroke-linejoin="round" />
<path d="M846 252 l34 -12 l6 5 l-2 9 q-6 0 -7 7 l-5 2 l-1 -10 l-20 7 z" fill="#e9ecf1" stroke="#4a5462" stroke-width="0.7" stroke-linejoin="round" />
<ellipse cx="882.0" cy="245.0" rx="2.0" ry="2.4" fill="#d5dae2" stroke="#333" stroke-width="0.5" />
<path d="M858 266 l34 -12 l6 5 l-2 9 q-6 0 -7 7 l-5 2 l-1 -10 l-20 7 z" fill="#e9ecf1" stroke="#4a5462" stroke-width="0.7" stroke-linejoin="round" />
<ellipse cx="894.0" cy="259.0" rx="2.0" ry="2.4" fill="#d5dae2" stroke="#333" stroke-width="0.5" />
<ellipse cx="1001.0" cy="449.0" rx="24.0" ry="27.0" fill="#8f8fa6" stroke="#3a3a48" stroke-width="1" />
<ellipse cx="997.0" cy="449.0" rx="20.0" ry="24.0" fill="#b9b9cb" stroke="#5a5a6a" stroke-width="0.7" />
<ellipse cx="1009.0" cy="455.0" rx="15.0" ry="16.0" fill="#7d7d1e" stroke="#4a4a10" stroke-width="0.8" />
<ellipse cx="880.0" cy="300.0" rx="13.0" ry="22.0" fill="#c5c9d6" stroke="#6a7482" stroke-width="0.7" transform="rotate(-20 880 300)"/>
<line x1="944.0" y1="330.0" x2="980.0" y2="317.0" stroke="#4a4a4a" stroke-width="2.6" />
<line x1="944.0" y1="330.0" x2="980.0" y2="317.0" stroke="#e8e8e8" stroke-width="1.2" />
<ellipse cx="981.0" cy="316.0" rx="2.6" ry="4.0" fill="#e0e0e0" stroke="#444" stroke-width="0.7" />
<polygon points="941.0,328.0 946.0,326.5 948.0,331.5 943.0,333.0" fill="#ddd" stroke="#444" stroke-width="0.6" stroke-linejoin="round" />
<polygon points="293.0,471.0 296.0,479.0 581.0,712.0 583.0,700.0" fill="#eceef3" stroke="#2b3440" stroke-width="0.9" stroke-linejoin="round" />
<polygon points="566.0,690.0 985.0,512.0 1012.0,510.0 583.0,700.0" fill="#f9f9fb" stroke="none" stroke-width="1" stroke-linejoin="round" />
<polygon points="583.0,700.0 581.0,712.0 1012.0,522.0 1012.0,510.0" fill="#dfe2ea" stroke="#2b3440" stroke-width="0.9" stroke-linejoin="round" />
<line x1="583.0" y1="700.0" x2="566.0" y2="690.0" stroke="#2b3440" stroke-width="0.8" />
<line x1="1012.0" y1="510.0" x2="975.0" y2="462.0" stroke="#2b3440" stroke-width="0.8" />
<line x1="1005.0" y1="513.0" x2="972.0" y2="470.0" stroke="#5c6673" stroke-width="0.6" />
<polygon points="338.0,380.0 557.0,599.0 566.0,690.0 352.0,452.0 346.0,400.0" fill="#c0c8d8" stroke="none" stroke-width="1" stroke-linejoin="round" />
<polygon points="346.0,402.0 548.0,612.0 552.0,650.0 351.0,442.0" fill="#b3bccd" stroke="none" stroke-width="1" stroke-linejoin="round" opacity="0.7" />
<polygon points="301.0,476.0 351.0,408.0 353.0,456.0" fill="#c4cad8" stroke="#2b3440" stroke-width="0.8" stroke-linejoin="round" />
<line x1="346.0" y1="394.0" x2="352.0" y2="452.0" stroke="#2b3440" stroke-width="0.9" />
<line x1="296.0" y1="470.0" x2="348.0" y2="452.0" stroke="#2b3440" stroke-width="0.8" />
<polygon points="347.0,452.0 440.0,420.0 545.0,530.0 455.0,565.0" fill="#d0d5df" stroke="#55606d" stroke-width="0.7" stroke-linejoin="round" opacity="0.9" />
<polygon points="440.0,420.0 456.0,430.0 556.0,536.0 545.0,530.0" fill="#bcc4d2" stroke="#55606d" stroke-width="0.6" stroke-linejoin="round" opacity="0.9" />
<polygon points="557.0,599.0 994.0,409.0 985.0,512.0 566.0,690.0" fill="#c9cedb" stroke="#2b3440" stroke-width="0.8" stroke-linejoin="round" />
<polygon points="557.0,606.0 994.0,416.0 990.0,448.0 559.0,640.0" fill="#b9c3d5" stroke="none" stroke-width="1" stroke-linejoin="round" opacity="0.6" />
<polygon points="970.0,424.0 996.0,415.0 1000.0,505.0 980.0,515.0" fill="#c8cfdc" stroke="#55606d" stroke-width="0.7" stroke-linejoin="round" opacity="0.9" />
<defs>
<linearGradient id="gLidBack" gradientUnits="userSpaceOnUse" x1="350" y1="380" x2="800" y2="230"><stop offset="0" stop-color="#a5b8d8"/><stop offset="0.6" stop-color="#a9bedd"/><stop offset="1" stop-color="#aac4e3"/></linearGradient>
<linearGradient id="gLidFront" gradientUnits="userSpaceOnUse" x1="420" y1="450" x2="960" y2="380"><stop offset="0" stop-color="#c2d9f0"/><stop offset="0.6" stop-color="#c9dff3"/><stop offset="1" stop-color="#b9d3ec"/></linearGradient>
<clipPath id="cLid"><polygon points="324.0,366.0 760.0,179.0 994.0,409.0 557.0,599.0"/></clipPath>
</defs>
<polygon points="324.0,366.0 557.0,599.0 994.0,409.0 994.0,417.0 557.0,607.0 324.0,373.0" fill="#8fa9cb" stroke="#2b3440" stroke-width="0.9" stroke-linejoin="round" />
<path d="M330.0 363.0 L752.0 182.0 Q762.0 178.0 769.0 186.0 L994.0 409.0 L557.0 599.0 L326.0 369.0 Q322.0 365.0 330.0 363.0 Z" fill="#bdd5ed" stroke="none" stroke-width="1" stroke-linejoin="round" />
<polygon points="351.1,374.4 758.3,199.1 963.8,404.6 556.1,579.4" fill="url(#gLidBack)" stroke="none" stroke-width="1" stroke-linejoin="round" />
<polygon points="407.0,430.3 814.6,255.4 963.8,404.6 556.1,579.4" fill="url(#gLidFront)" stroke="none" stroke-width="1" stroke-linejoin="round" />
<polygon points="389.2,431.2 407.0,430.3 556.1,579.4 550.0,592.0" fill="#a9c2e0" stroke="none" stroke-width="1" stroke-linejoin="round" opacity="0.9" />
<polygon points="784.0,264.0 808.0,248.0 992.0,420.0 966.0,430.0" fill="#a6bfdd" stroke="none" stroke-width="1" stroke-linejoin="round" opacity="0.9" />
<polygon points="757.0,203.0 784.0,264.0 966.0,430.0 962.0,408.0" fill="#b1cbe7" stroke="none" stroke-width="1" stroke-linejoin="round" opacity="0.75" />
<defs>
<linearGradient id="gRollL" gradientUnits="userSpaceOnUse" x1="486" y1="519" x2="506" y2="498"><stop offset="0" stop-color="#b0e4fb"/><stop offset="0.55" stop-color="#88d5f8"/><stop offset="1" stop-color="#6cc6f4"/></linearGradient>
<linearGradient id="gRollR" gradientUnits="userSpaceOnUse" x1="815" y1="443" x2="844" y2="411"><stop offset="0" stop-color="#a6dbf8"/><stop offset="0.5" stop-color="#3da9ee"/><stop offset="1" stop-color="#8fd0f6"/></linearGradient>
<linearGradient id="gRollLo" gradientUnits="userSpaceOnUse" x1="578" y1="636" x2="608" y2="606"><stop offset="0" stop-color="#bcd6ec"/><stop offset="0.5" stop-color="#86bce6"/><stop offset="1" stop-color="#b2d2ec"/></linearGradient>
</defs>
<polygon points="417.8,423.6 625.8,622.6 598.2,651.4 390.2,452.4" fill="#b3cbe4" stroke="none" stroke-width="1" stroke-linejoin="round" opacity="0.8" />
<polyline points="388.0,462.0 405.2,453.3 394.3,468.6 411.5,459.8 400.6,475.1 417.8,466.4 407.0,481.7 424.1,473.0 413.3,488.2 430.4,479.5 419.6,494.8 436.8,486.1 425.9,501.4 443.1,492.6 432.2,507.9 449.4,499.2 438.6,514.5 455.7,505.8 444.9,521.0 462.0,512.3 451.2,527.6 468.4,518.9 457.5,534.2 474.7,525.4 463.8,540.7 481.0,532.0 470.2,547.3 487.3,538.6 476.5,553.8 493.6,545.1 482.8,560.4 500.0,551.7 489.1,567.0 506.3,558.2 495.4,573.5 512.6,564.8 501.8,580.1 518.9,571.4 508.1,586.6 525.2,577.9 514.4,593.2 531.6,584.5 520.7,599.8 537.9,591.0 527.0,606.3 544.2,597.6 533.4,612.9 550.5,604.2 539.7,619.4 556.8,610.7 546.0,626.0" fill="none" stroke="#5c6a7b" stroke-width="0.9" stroke-linejoin="round" />
<polyline points="376.0,470.0 391.2,459.4 382.3,476.8 397.5,466.1 388.7,483.5 403.8,472.9 395.0,490.2 410.2,479.6 401.3,497.0 416.5,486.4 407.7,503.8 422.8,493.1 414.0,510.5 429.2,499.9 420.3,517.2 435.5,506.6 426.7,524.0 441.8,513.4 433.0,530.8 448.2,520.1 439.3,537.5 454.5,526.9 445.7,544.2 460.8,533.6 452.0,551.0 467.2,540.4 458.3,557.8 473.5,547.1 464.7,564.5 479.8,553.9 471.0,571.2 486.2,560.6 477.3,578.0 492.5,567.4 483.7,584.8 498.8,574.1 490.0,591.5 505.2,580.9 496.3,598.2 511.5,587.6 502.7,605.0 517.8,594.4 509.0,611.8 524.2,601.1 515.3,618.5 530.5,607.9 521.7,625.2 536.8,614.6 528.0,632.0" fill="none" stroke="#737f90" stroke-width="0.8" stroke-linejoin="round" opacity="0.85" />
<polygon points="409.0,435.0 417.0,427.0 428.0,427.0 588.0,579.0 584.0,594.0 560.0,589.0" fill="url(#gRollL)" stroke="none" stroke-width="1" stroke-linejoin="round" />
<polyline points="430.0,428.0 435.5,413.3 437.0,434.6 442.5,419.9 444.0,441.2 449.5,426.5 451.0,447.8 456.5,433.2 458.0,454.5 463.5,439.8 465.0,461.1 470.5,446.4 472.0,467.7 477.5,453.0 479.0,474.3 484.5,459.6 486.0,480.9 491.5,466.2 493.0,487.5 498.5,472.8 500.0,494.2 505.5,479.5 507.0,500.8 512.5,486.1 514.0,507.4 519.5,492.7 521.0,514.0 526.5,499.3 528.0,520.6 533.5,505.9 535.0,527.2 540.5,512.5 542.0,533.8 547.5,519.2 549.0,540.5 554.5,525.8 556.0,547.1 561.5,532.4 563.0,553.7 568.5,539.0 570.0,560.3 575.5,545.6 577.0,566.9 582.5,552.2 584.0,573.5 589.5,558.8 591.0,580.2 596.5,565.5 598.0,586.8 603.5,572.1 605.0,593.4 610.5,578.7 612.0,600.0" fill="none" stroke="#4a6583" stroke-width="0.9" stroke-linejoin="round" />
<path d="M430.0 424.0l0.0 17.0M436.9 430.5l0.0 17.0M443.7 437.0l0.0 17.0M450.6 443.6l0.0 17.0M457.5 450.1l0.0 17.0M464.3 456.6l0.0 17.0M471.2 463.1l0.0 17.0M478.1 469.7l0.0 17.0M485.0 476.2l0.0 17.0M491.8 482.7l0.0 17.0M498.7 489.2l0.0 17.0M505.6 495.7l0.0 17.0M512.4 502.3l0.0 17.0M519.3 508.8l0.0 17.0M526.2 515.3l0.0 17.0M533.0 521.8l0.0 17.0M539.9 528.3l0.0 17.0M546.8 534.9l0.0 17.0M553.7 541.4l0.0 17.0M560.5 547.9l0.0 17.0M567.4 554.4l0.0 17.0M574.3 561.0l0.0 17.0M581.1 567.5l0.0 17.0M588.0 574.0l0.0 17.0" fill="none" stroke="#3585c8" stroke-width="1.1" stroke-linejoin="round" />
<polygon points="590.0,592.0 625.8,622.6 598.2,651.4 564.0,618.0" fill="url(#gRollLo)" stroke="none" stroke-width="1" stroke-linejoin="round" opacity="0.95" />
<polyline points="575.0,640.0 584.4,621.5 585.8,635.0 595.2,616.5 596.7,630.0 606.1,611.5 607.5,625.0 616.9,606.5 618.3,620.0 627.8,601.5 629.2,615.0 638.6,596.5 640.0,610.0" fill="none" stroke="#5d7088" stroke-width="0.9" stroke-linejoin="round" />
<path d="M586.0 614.0l0.0 -14.0M592.7 622.7l0.0 -14.0M599.3 631.3l0.0 -14.0M606.0 640.0l0.0 -14.0" fill="none" stroke="#4a7db0" stroke-width="0.9" stroke-linejoin="round" />
<polygon points="746.6,366.8 773.4,337.2 936.4,485.2 909.6,514.8" fill="url(#gRollR)" stroke="none" stroke-width="1" stroke-linejoin="round" />
<line x1="760.0" y1="352.0" x2="923.0" y2="500.0" stroke="#2f86c8" stroke-width="0.8" opacity="0.7" />
<ellipse cx="760.0" cy="352.0" rx="14.0" ry="19.0" fill="#8ccdf4" stroke="none" stroke-width="1" transform="rotate(-48 760 352)"/>
<polyline points="790.0,346.0 795.5,331.2 797.0,352.4 802.5,337.5 804.0,358.7 809.5,343.9 811.0,365.1 816.5,350.3 818.0,371.5 823.5,356.6 825.0,377.8 830.5,363.0 832.0,384.2 837.5,369.4 839.0,390.5 844.5,375.7 846.0,396.9 851.5,382.1 853.0,403.3 858.5,388.5 860.0,409.6 865.5,394.8 867.0,416.0 872.5,401.2 874.0,422.4 879.5,407.5 881.0,428.7 886.5,413.9 888.0,435.1 893.5,420.3 895.0,441.5 900.5,426.6 902.0,447.8 907.5,433.0 909.0,454.2 914.5,439.4 916.0,460.5 921.5,445.7 923.0,466.9 928.5,452.1 930.0,473.3 935.5,458.5 937.0,479.6 942.5,464.8 944.0,486.0" fill="none" stroke="#4a6583" stroke-width="0.9" stroke-linejoin="round" />
<polyline points="742.0,380.0 736.3,395.0 748.6,386.0 742.9,401.0 755.1,392.0 749.4,407.0 761.7,398.0 756.0,413.0 768.3,404.0 762.6,419.0 774.9,410.0 769.1,425.0 781.4,416.0 775.7,431.0 788.0,422.0 782.3,437.0 794.6,428.0 788.9,443.0 801.1,434.0 795.4,449.0 807.7,440.0 802.0,455.0 814.3,446.0 808.6,461.0 820.9,452.0 815.1,467.0 827.4,458.0 821.7,473.0 834.0,464.0 828.3,479.0 840.6,470.0 834.9,485.0 847.1,476.0 841.4,491.0 853.7,482.0 848.0,497.0 860.3,488.0 854.6,503.0 866.9,494.0 861.1,509.0 873.4,500.0 867.7,515.0 880.0,506.0" fill="none" stroke="#4a7aa6" stroke-width="0.8" stroke-linejoin="round" opacity="0.8" />
<path d="M790.0 342.0l0.0 17.0M797.0 348.4l0.0 17.0M804.0 354.8l0.0 17.0M811.0 361.2l0.0 17.0M818.0 367.6l0.0 17.0M825.0 374.0l0.0 17.0M832.0 380.4l0.0 17.0M839.0 386.8l0.0 17.0M846.0 393.2l0.0 17.0M853.0 399.6l0.0 17.0M860.0 406.0l0.0 17.0M867.0 412.4l0.0 17.0M874.0 418.8l0.0 17.0M881.0 425.2l0.0 17.0M888.0 431.6l0.0 17.0M895.0 438.0l0.0 17.0M902.0 444.4l0.0 17.0M909.0 450.8l0.0 17.0M916.0 457.2l0.0 17.0M923.0 463.6l0.0 17.0M930.0 470.0l0.0 17.0" fill="none" stroke="#2f7fc4" stroke-width="1.1" stroke-linejoin="round" />
<path d="M770.0 372.0l0.0 15.0M776.8 378.3l0.0 15.0M783.7 384.6l0.0 15.0M790.5 390.9l0.0 15.0M797.4 397.3l0.0 15.0M804.2 403.6l0.0 15.0M811.1 409.9l0.0 15.0M817.9 416.2l0.0 15.0M824.7 422.5l0.0 15.0M831.6 428.8l0.0 15.0M838.4 435.2l0.0 15.0M845.3 441.5l0.0 15.0M852.1 447.8l0.0 15.0M858.9 454.1l0.0 15.0M865.8 460.4l0.0 15.0M872.6 466.7l0.0 15.0M879.5 473.1l0.0 15.0M886.3 479.4l0.0 15.0M893.2 485.7l0.0 15.0M900.0 492.0l0.0 15.0" fill="none" stroke="#4d88bd" stroke-width="0.8" stroke-linejoin="round" opacity="0.7" />
<polygon points="903.9,455.7 940.0,488.0 910.0,518.0 863.8,473.2" fill="#c6ccda" stroke="none" stroke-width="1" stroke-linejoin="round" opacity="0.6" />
<line x1="810.0" y1="343.0" x2="948.0" y2="469.0" stroke="#5b7fa6" stroke-width="0.6" opacity="0.55" />
<line x1="817.0" y1="337.0" x2="955.0" y2="463.0" stroke="#5b7fa6" stroke-width="0.6" opacity="0.55" />
<line x1="824.0" y1="331.0" x2="962.0" y2="457.0" stroke="#5b7fa6" stroke-width="0.6" opacity="0.55" />
<line x1="831.0" y1="325.0" x2="969.0" y2="451.0" stroke="#5b7fa6" stroke-width="0.6" opacity="0.55" />
<path d="M808.0 340.0l24.0 -20.0M814.8 346.1l24.0 -20.0M821.5 352.2l24.0 -20.0M828.3 358.3l24.0 -20.0M835.0 364.4l24.0 -20.0M841.8 370.5l24.0 -20.0M848.6 376.6l24.0 -20.0M855.3 382.7l24.0 -20.0M862.1 388.8l24.0 -20.0M868.9 394.9l24.0 -20.0M875.6 401.0l24.0 -20.0M882.4 407.0l24.0 -20.0M889.1 413.1l24.0 -20.0M895.9 419.2l24.0 -20.0M902.7 425.3l24.0 -20.0M909.4 431.4l24.0 -20.0M916.2 437.5l24.0 -20.0M923.0 443.6l24.0 -20.0M929.7 449.7l24.0 -20.0M936.5 455.8l24.0 -20.0M943.2 461.9l24.0 -20.0M950.0 468.0l24.0 -20.0" fill="none" stroke="#5b7fa6" stroke-width="0.6" stroke-linejoin="round" opacity="0.6" />
<defs>
<radialGradient id="gDisc" gradientUnits="userSpaceOnUse" cx="660" cy="400" r="180" gradientTransform="translate(0 144) scale(1 0.64)"><stop offset="0" stop-color="#d4e6f5"/><stop offset="0.8" stop-color="#c6dcf0"/><stop offset="1" stop-color="#b9d1ea"/></radialGradient>
</defs>
<ellipse cx="659.0" cy="381.0" rx="178.0" ry="114.0" fill="url(#gDisc)" stroke="none" stroke-width="1" opacity="0.62" clip-path="url(#cLid)"/>
<polygon points="812.2,416.2 807.1,424.0 801.1,431.5 794.1,438.6 786.3,445.4 777.6,451.7 768.1,457.5 757.9,462.9 747.0,467.7 735.5,471.9 723.6,475.6 711.2,478.6 698.4,480.9 685.4,482.6 672.3,483.7 659.0,484.0 645.7,483.7 632.6,482.6 619.6,480.9 606.8,478.6 594.4,475.6 582.5,471.9 571.0,467.7 560.1,462.9 549.9,457.5 540.4,451.7 531.7,445.4 523.9,438.6 516.9,431.5 510.9,424.0 505.8,416.2 508.6,402.2 513.6,409.7 519.5,417.0 526.4,423.9 534.1,430.5 542.6,436.6 551.9,442.3 562.0,447.5 572.6,452.2 583.9,456.3 595.6,459.8 607.8,462.7 620.3,465.0 633.1,466.7 646.0,467.7 659.0,468.0 672.0,467.7 684.9,466.7 697.7,465.0 710.2,462.7 722.4,459.8 734.1,456.3 745.4,452.2 756.0,447.5 766.1,442.3 775.4,436.6 783.9,430.5 791.6,423.9 798.5,417.0 804.4,409.7 809.4,402.2" fill="#a5c3e2" stroke="none" stroke-width="1" stroke-linejoin="round" opacity="0.7" />
<ellipse cx="659.0" cy="381.0" rx="178.0" ry="114.0" fill="none" stroke="#2b3440" stroke-width="1.4" clip-path="url(#cLid)"/>
<ellipse cx="659.0" cy="381.0" rx="172.0" ry="109.0" fill="none" stroke="#44505e" stroke-width="0.8" clip-path="url(#cLid)"/>
<ellipse cx="659.0" cy="381.0" rx="163.0" ry="103.0" fill="none" stroke="#3a4653" stroke-width="1.1" clip-path="url(#cLid)"/>
<ellipse cx="659.0" cy="381.0" rx="158.0" ry="99.0" fill="none" stroke="#5a6675" stroke-width="0.7" clip-path="url(#cLid)"/>
<ellipse cx="659.0" cy="381.0" rx="175.0" ry="111.5" fill="none" stroke="#4a5868" stroke-width="0.6" opacity="0.8" clip-path="url(#cLid)"/>
<ellipse cx="659.0" cy="381.0" rx="168.0" ry="106.0" fill="none" stroke="#4a5868" stroke-width="0.6" opacity="0.7" clip-path="url(#cLid)"/>
<ellipse cx="659.0" cy="381.0" rx="152.0" ry="95.0" fill="none" stroke="#5a6675" stroke-width="0.6" opacity="0.7" clip-path="url(#cLid)"/>
<polygon points="496.1,425.2 492.8,419.8 489.9,414.4 487.5,408.9 485.5,403.3 483.9,397.7 482.8,392.0 482.2,386.3 482.0,380.6 482.3,374.9 483.0,369.2 494.9,370.0 494.2,375.3 494.0,380.6 494.2,386.0 494.8,391.3 495.8,396.6 497.3,401.8 499.1,407.0 501.4,412.1 504.0,417.2 507.1,422.2" fill="#dfe2e6" stroke="#3a4653" stroke-width="0.7" stroke-linejoin="round" />
<polygon points="505.0,418.6 502.5,414.3 500.4,409.9 498.6,405.5 497.0,401.0 495.8,396.5 494.9,392.0 494.3,387.4 494.0,382.8 494.1,378.3 494.4,373.7 499.4,373.9 499.1,378.3 499.0,382.8 499.3,387.2 499.9,391.6 500.8,396.0 501.9,400.4 503.4,404.8 505.2,409.1 507.3,413.3 509.6,417.5" fill="#fbfbfb" stroke="#3a4653" stroke-width="0.7" stroke-linejoin="round" />
<polygon points="616.2,490.6 606.7,488.9 597.3,486.9 588.1,484.5 579.2,481.9 570.5,478.9 562.1,475.6 554.0,472.0 546.2,468.1 538.7,463.9 531.7,459.5 540.3,454.2 546.9,458.3 553.8,462.2 561.1,465.8 568.7,469.1 576.5,472.2 584.6,475.0 592.9,477.5 601.5,479.7 610.2,481.6 619.1,483.2" fill="#dfe2e6" stroke="#3a4653" stroke-width="0.7" stroke-linejoin="round" />
<polygon points="611.3,487.7 603.2,486.1 595.3,484.2 587.5,482.1 579.9,479.7 572.5,477.1 565.3,474.3 558.3,471.3 551.5,468.0 545.0,464.5 538.8,460.8 541.6,459.0 547.7,462.6 554.0,466.0 560.6,469.2 567.5,472.2 574.5,474.9 581.8,477.4 589.2,479.8 596.8,481.8 604.5,483.7 612.4,485.2" fill="#878d95" stroke="#3a4653" stroke-width="0.7" stroke-linejoin="round" />
<polygon points="777.4,465.0 770.4,468.8 763.0,472.4 755.4,475.8 747.5,478.9 739.4,481.7 731.0,484.2 722.4,486.5 713.7,488.5 704.8,490.1 695.8,491.5 693.3,484.0 701.7,482.7 710.0,481.2 718.1,479.3 726.1,477.2 733.9,474.8 741.5,472.2 748.9,469.3 756.0,466.2 762.8,462.8 769.4,459.3" fill="#dfe2e6" stroke="#3a4653" stroke-width="0.7" stroke-linejoin="round" />
<polygon points="770.2,466.0 764.1,469.2 757.7,472.1 751.2,474.9 744.5,477.5 737.5,479.9 730.5,482.1 723.2,484.1 715.9,485.8 708.4,487.4 700.9,488.7 699.9,486.2 707.3,484.9 714.6,483.4 721.8,481.7 728.8,479.8 735.7,477.6 742.5,475.3 749.1,472.8 755.5,470.0 761.6,467.1 767.6,464.1" fill="#878d95" stroke="#3a4653" stroke-width="0.7" stroke-linejoin="round" />
<polygon points="824.2,340.5 827.3,346.1 830.0,351.8 832.1,357.5 833.8,363.3 835.0,369.2 835.8,375.1 836.0,381.0 835.8,386.9 835.0,392.8 833.8,398.7 822.0,397.5 823.1,392.0 823.8,386.5 824.0,381.0 823.8,375.5 823.1,370.0 822.0,364.5 820.4,359.1 818.4,353.7 815.9,348.5 813.0,343.3" fill="#dfe2e6" stroke="#3a4653" stroke-width="0.7" stroke-linejoin="round" />
<polygon points="820.7,345.5 823.0,350.2 825.1,355.0 826.7,359.8 828.1,364.7 829.1,369.6 829.7,374.5 830.0,379.5 829.9,384.4 829.5,389.4 828.7,394.3 824.8,394.0 825.5,389.2 825.9,384.3 826.0,379.5 825.7,374.7 825.1,369.9 824.1,365.1 822.8,360.3 821.2,355.6 819.2,350.9 816.9,346.3" fill="#878d95" stroke="#3a4653" stroke-width="0.7" stroke-linejoin="round" />
<polygon points="600.0,420.0 690.0,388.0 740.0,430.0 650.0,470.0" fill="#c9dcee" stroke="#4a5868" stroke-width="0.7" stroke-linejoin="round" opacity="0.8" />
<polygon points="636.0,425.0 690.0,405.0 716.0,430.0 662.0,452.0" fill="#d9e7f3" stroke="#4a5868" stroke-width="0.6" stroke-linejoin="round" opacity="0.9" />
<ellipse cx="651.0" cy="340.0" rx="130.0" ry="70.0" fill="#bcd2e8" stroke="#2b3440" stroke-width="1.4" opacity="0.7" />
<ellipse cx="651.0" cy="336.0" rx="124.0" ry="66.0" fill="none" stroke="#3a4653" stroke-width="1.0" />
<ellipse cx="651.0" cy="333.0" rx="112.0" ry="60.0" fill="none" stroke="#4a5868" stroke-width="0.7" opacity="0.8" />
<ellipse cx="651.0" cy="338.0" rx="127.0" ry="68.0" fill="none" stroke="#3a4653" stroke-width="0.7" opacity="0.8" />
<polyline points="779.0,358.2 776.4,364.5 772.6,370.7 767.8,376.7 762.0,382.4 755.3,387.8 747.6,392.8 739.1,397.5 729.8,401.7 719.9,405.4 709.3,408.6 698.3,411.2 686.8,413.3 675.1,414.8 663.1,415.7 651.0,416.0 638.9,415.7 626.9,414.8 615.2,413.3 603.7,411.2 592.7,408.6 582.1,405.4 572.2,401.7 562.9,397.5 554.4,392.8 546.7,387.8 540.0,382.4 534.2,376.7 529.4,370.7 525.6,364.5 523.0,358.2" fill="none" stroke="#3a4653" stroke-width="0.9" stroke-linejoin="round" opacity="0.8" />
<defs><clipPath id="cRing"><ellipse cx="659" cy="381" rx="178" ry="114"/></clipPath></defs>
<polygon points="746.6,366.8 773.4,337.2 936.4,485.2 909.6,514.8" fill="url(#gRollR)" stroke="none" stroke-width="1" stroke-linejoin="round" opacity="0.5" clip-path="url(#cRing)"/>
<path d="M770.0 330.0l0.0 17.0M777.0 336.2l0.0 17.0M784.0 342.4l0.0 17.0M791.0 348.6l0.0 17.0M798.0 354.8l0.0 17.0M805.0 361.0l0.0 17.0M812.0 367.2l0.0 17.0M819.0 373.4l0.0 17.0M826.0 379.6l0.0 17.0M833.0 385.8l0.0 17.0M840.0 392.0l0.0 17.0" fill="none" stroke="#2f7fc4" stroke-width="1.0" stroke-linejoin="round" opacity="0.8" />
<ellipse cx="706.0" cy="430.0" rx="38.0" ry="24.0" fill="#c9ccd2" stroke="#4a4a4a" stroke-width="0.8" />
<ellipse cx="706.0" cy="426.0" rx="36.0" ry="22.0" fill="#f4f4f4" stroke="#555" stroke-width="0.8" />
<ellipse cx="706.0" cy="422.0" rx="6.0" ry="4.4" fill="#d9d9d9" stroke="#555" stroke-width="0.7" />
<ellipse cx="686.0" cy="416.0" rx="2.8" ry="1.9" fill="#e2e2e2" stroke="#666" stroke-width="0.5" />
<ellipse cx="724.0" cy="414.0" rx="2.8" ry="1.9" fill="#e2e2e2" stroke="#666" stroke-width="0.5" />
<ellipse cx="680.0" cy="432.0" rx="2.8" ry="1.9" fill="#e2e2e2" stroke="#666" stroke-width="0.5" />
<ellipse cx="716.0" cy="440.0" rx="2.8" ry="1.9" fill="#e2e2e2" stroke="#666" stroke-width="0.5" />
<ellipse cx="734.0" cy="428.0" rx="2.8" ry="1.9" fill="#e2e2e2" stroke="#666" stroke-width="0.5" />
<line x1="546.0" y1="378.0" x2="551.0" y2="437.0" stroke="#6f7780" stroke-width="4.4" />
<line x1="546.0" y1="378.0" x2="551.0" y2="437.0" stroke="#b4bac1" stroke-width="2" />
<ellipse cx="546.0" cy="378.0" rx="3.2" ry="2.0" fill="#aab2bb" stroke="#333" stroke-width="0.6" />
<line x1="649.0" y1="404.0" x2="655.0" y2="466.0" stroke="#6f7780" stroke-width="4.4" />
<line x1="649.0" y1="404.0" x2="655.0" y2="466.0" stroke="#b4bac1" stroke-width="2" />
<ellipse cx="649.0" cy="404.0" rx="3.2" ry="2.0" fill="#aab2bb" stroke="#333" stroke-width="0.6" />
<line x1="759.0" y1="358.0" x2="764.0" y2="420.0" stroke="#6f7780" stroke-width="4.4" />
<line x1="759.0" y1="358.0" x2="764.0" y2="420.0" stroke="#b4bac1" stroke-width="2" />
<ellipse cx="759.0" cy="358.0" rx="3.2" ry="2.0" fill="#aab2bb" stroke="#333" stroke-width="0.6" />
<polygon points="676.0,508.0 742.0,480.0 754.0,492.0 688.0,520.0" fill="#dbe6f1" stroke="#3a4653" stroke-width="0.7" stroke-linejoin="round" />
<polygon points="676.0,508.0 688.0,520.0 690.0,548.0 678.0,536.0" fill="#9fb2c9" stroke="#3a4653" stroke-width="0.6" stroke-linejoin="round" />
<polygon points="688.0,520.0 754.0,492.0 756.0,520.0 690.0,548.0" fill="#a9bdd4" stroke="#3a4653" stroke-width="0.6" stroke-linejoin="round" opacity="0.9" />
<ellipse cx="703.0" cy="506.0" rx="3.4" ry="2.6" fill="#e8edf2" stroke="#333" stroke-width="0.6" />
<ellipse cx="724.0" cy="497.0" rx="3.4" ry="2.6" fill="#e8edf2" stroke="#333" stroke-width="0.6" />
<polygon points="770.0,466.0 812.0,446.0 832.0,462.0 790.0,482.0" fill="#dbe6f1" stroke="#3a4653" stroke-width="0.7" stroke-linejoin="round" />
<polygon points="790.0,482.0 832.0,462.0 834.0,496.0 792.0,516.0" fill="#9db1c9" stroke="#3a4653" stroke-width="0.6" stroke-linejoin="round" opacity="0.9" />
<polygon points="770.0,466.0 790.0,482.0 792.0,516.0 772.0,500.0" fill="#90a5be" stroke="#3a4653" stroke-width="0.6" stroke-linejoin="round" />
<ellipse cx="792.0" cy="466.0" rx="3.4" ry="2.6" fill="#e8edf2" stroke="#333" stroke-width="0.6" />
<ellipse cx="808.0" cy="459.0" rx="3.4" ry="2.6" fill="#e8edf2" stroke="#333" stroke-width="0.6" />
<polygon points="328.0,361.5 753.0,178.5 756.0,183.0 330.0,366.5" fill="#93abcd" stroke="#2b3440" stroke-width="0.9" stroke-linejoin="round" />
<path d="M330.0 363.0 L752.0 182.0 Q762.0 178.0 769.0 186.0 L994.0 409.0 L557.0 599.0 L326.0 369.0 Q322.0 365.0 330.0 363.0 Z" fill="none" stroke="#2b3440" stroke-width="1.1" stroke-linejoin="round" />
<polyline points="334.7,367.4 757.7,186.0" fill="none" stroke="#3a4653" stroke-width="0.7" stroke-linejoin="round" />
<polygon points="351.1,374.4 758.3,199.1 963.8,404.6 556.1,579.4" fill="none" stroke="#2f3a48" stroke-width="1.2" stroke-linejoin="round" />
<polyline points="358.9,376.0 558.1,575.2" fill="none" stroke="#5f6d7d" stroke-width="0.6" stroke-linejoin="round" />
<polyline points="784.0,264.0 966.0,430.0" fill="none" stroke="#3a4653" stroke-width="0.8" stroke-linejoin="round" />
<polyline points="784.0,264.0 808.0,248.0 990.0,416.0" fill="none" stroke="#3a4653" stroke-width="0.7" stroke-linejoin="round" />
<polyline points="784.0,264.0 786.0,292.0 962.0,452.0" fill="none" stroke="#5f6d7d" stroke-width="0.6" stroke-linejoin="round" />
<polygon points="868.0,338.0 886.0,326.0 888.0,356.0 870.0,368.0" fill="#8ea6c4" stroke="#4a5868" stroke-width="0.6" stroke-linejoin="round" opacity="0.7" />
<polygon points="800.0,276.0 818.0,262.0 820.0,300.0 802.0,312.0" fill="#8ea6c4" stroke="#4a5868" stroke-width="0.6" stroke-linejoin="round" opacity="0.6" />
<path d="M828 318 Q838 292 852 296 Q866 306 870 336 Q852 348 836 338 Z" fill="#8f9bb0" stroke="none" stroke-width="1" stroke-linejoin="round" opacity="0.75" />
<ellipse cx="333.0" cy="360.0" rx="2.2" ry="2.8" fill="#c9d8ea" stroke="#2f3a48" stroke-width="0.7" />
<ellipse cx="341.0" cy="372.0" rx="2.2" ry="2.8" fill="#c9d8ea" stroke="#2f3a48" stroke-width="0.7" />
<ellipse cx="497.0" cy="291.0" rx="2.2" ry="2.8" fill="#c9d8ea" stroke="#2f3a48" stroke-width="0.7" />
<ellipse cx="767.0" cy="186.0" rx="2.2" ry="2.8" fill="#c9d8ea" stroke="#2f3a48" stroke-width="0.7" />
<ellipse cx="836.0" cy="268.0" rx="2.2" ry="2.8" fill="#c9d8ea" stroke="#2f3a48" stroke-width="0.7" />
<ellipse cx="909.0" cy="338.0" rx="2.2" ry="2.8" fill="#c9d8ea" stroke="#2f3a48" stroke-width="0.7" />
<ellipse cx="988.0" cy="404.0" rx="2.2" ry="2.8" fill="#c9d8ea" stroke="#2f3a48" stroke-width="0.7" />
<ellipse cx="524.0" cy="439.0" rx="2.2" ry="2.8" fill="#c9d8ea" stroke="#2f3a48" stroke-width="0.7" />
<ellipse cx="549.0" cy="585.0" rx="2.2" ry="2.8" fill="#c9d8ea" stroke="#2f3a48" stroke-width="0.7" />
<ellipse cx="590.0" cy="588.0" rx="2.2" ry="2.8" fill="#c9d8ea" stroke="#2f3a48" stroke-width="0.7" />
<polygon points="487.0,332.0 520.0,318.0 528.0,326.0 495.0,340.0" fill="#cfdff0" stroke="#4a5868" stroke-width="0.6" stroke-linejoin="round" />
<ellipse cx="653.0" cy="362.0" rx="50.0" ry="28.0" fill="#8e9db6" stroke="#3a4653" stroke-width="0.7" opacity="0.9" />
<polygon points="603.0,340.0 703.0,340.0 703.0,362.0 603.0,362.0" fill="#8e9db6" stroke="none" stroke-width="1" stroke-linejoin="round" opacity="0.9" />
<ellipse cx="653.0" cy="340.0" rx="50.0" ry="26.0" fill="#a7b3c7" stroke="#3a4653" stroke-width="0.7" />
<polygon points="534.0,258.0 534.6,251.3 536.3,244.7 539.1,238.2 543.1,232.0 548.1,226.0 554.1,220.4 561.0,215.2 568.7,210.4 577.3,206.2 586.5,202.6 596.3,199.5 606.6,197.1 617.2,195.4 628.0,194.4 639.0,194.0 650.0,194.4 660.8,195.4 671.4,197.1 681.7,199.5 691.5,202.6 700.7,206.2 709.3,210.4 717.0,215.2 723.9,220.4 729.9,226.0 734.9,232.0 738.9,238.2 741.7,244.7 743.4,251.3 744.0,258.0 745.0,290.0 744.4,296.7 742.7,303.3 739.9,309.8 735.9,316.0 730.9,322.0 724.9,327.6 718.0,332.8 710.3,337.6 701.7,341.8 692.5,345.4 682.7,348.5 672.4,350.9 661.8,352.6 651.0,353.6 640.0,354.0 629.0,353.6 618.2,352.6 607.6,350.9 597.3,348.5 587.5,345.4 578.3,341.8 569.7,337.6 562.0,332.8 555.1,327.6 549.1,322.0 544.1,316.0 540.1,309.8 537.3,303.3 535.6,296.7 535.0,290.0" fill="#b3c4da" stroke="none" stroke-width="1" stroke-linejoin="round" opacity="0.5" />
<polygon points="744.0,258.0 743.1,266.4 740.4,274.6 736.0,282.5 729.9,290.0 722.3,297.0 713.2,303.3 702.9,308.8 691.5,313.4 679.2,317.1 666.2,319.8 652.7,321.5 639.0,322.0 625.3,321.5 611.8,319.8 598.8,317.1 586.5,313.4 575.1,308.8 564.8,303.3 555.7,297.0 548.1,290.0 542.0,282.5 537.6,274.6 534.9,266.4 534.0,258.0 534.9,249.6 537.6,241.4 542.0,233.5 548.1,226.0 555.7,219.0 564.8,212.7 575.1,207.2 586.5,202.6 598.8,198.9 611.8,196.2 625.3,194.5 639.0,194.0 652.7,194.5 666.2,196.2 679.2,198.9 691.5,202.6 702.9,207.2 713.2,212.7 722.3,219.0 729.9,226.0 736.0,233.5 740.4,241.4 743.1,249.6 744.0,258.0" fill="#c9d6e6" stroke="none" stroke-width="1" stroke-linejoin="round" opacity="0.35" />
<polygon points="620.8,321.0 610.6,319.6 600.6,317.6 591.1,315.0 582.0,311.8 573.5,308.0 565.7,303.8 558.6,299.1 552.2,294.1 546.8,288.6 542.2,282.9 538.7,276.9 536.1,270.7 534.5,264.4 534.0,258.0 535.0,290.0 535.5,296.4 537.1,302.7 539.7,308.9 543.2,314.9 547.8,320.6 553.2,326.1 559.6,331.1 566.7,335.8 574.5,340.0 583.0,343.8 592.1,347.0 601.6,349.6 611.6,351.6 621.8,353.0" fill="#9db1cb" stroke="none" stroke-width="1" stroke-linejoin="round" opacity="0.55" />
<ellipse cx="651.0" cy="322.0" rx="64.0" ry="35.0" fill="#adb5c2" stroke="#2f3a48" stroke-width="1.0" opacity="0.95" />
<ellipse cx="651.0" cy="322.0" rx="60.0" ry="31.0" fill="none" stroke="#2f3845" stroke-width="2.6" stroke-dasharray="3.2 2"/>
<ellipse cx="651.0" cy="316.0" rx="52.0" ry="27.0" fill="#d5dae2" stroke="#3a4653" stroke-width="0.8" />
<ellipse cx="654.0" cy="308.0" rx="40.0" ry="21.0" fill="#a9b1bd" stroke="#3a4653" stroke-width="0.8" />
<ellipse cx="656.0" cy="304.0" rx="32.0" ry="17.0" fill="#f1f2f4" stroke="#4a4a4a" stroke-width="0.8" />
<ellipse cx="652.0" cy="303.0" rx="22.0" ry="12.0" fill="#8f97a6" stroke="#333" stroke-width="0.7" />
<ellipse cx="612.0" cy="332.0" rx="6.0" ry="4.0" fill="#c3c9d3" stroke="#3a4653" stroke-width="0.7" />
<ellipse cx="672.0" cy="337.0" rx="6.0" ry="4.0" fill="#c3c9d3" stroke="#3a4653" stroke-width="0.7" />
<ellipse cx="639.0" cy="258.0" rx="105.0" ry="64.0" fill="none" stroke="#2b3440" stroke-width="1.5" />
<ellipse cx="639.0" cy="259.0" rx="100.0" ry="60.0" fill="none" stroke="#3a4653" stroke-width="0.9" />
<polyline points="745.0,290.0 744.4,296.7 742.7,303.3 739.9,309.8 735.9,316.0 730.9,322.0 724.9,327.6 718.0,332.8 710.3,337.6 701.7,341.8 692.5,345.4 682.7,348.5 672.4,350.9 661.8,352.6 651.0,353.6 640.0,354.0 629.0,353.6 618.2,352.6 607.6,350.9 597.3,348.5 587.5,345.4 578.3,341.8 569.7,337.6 562.0,332.8 555.1,327.6 549.1,322.0 544.1,316.0 540.1,309.8 537.3,303.3 535.6,296.7 535.0,290.0" fill="none" stroke="#2b3440" stroke-width="1.4" stroke-linejoin="round" />
<polyline points="736.5,293.2 734.5,298.6 731.7,303.8 728.1,308.9 723.7,313.7 718.6,318.2 712.8,322.5 706.4,326.4 699.4,329.9 691.9,333.0 684.0,335.7 675.7,338.0 667.0,339.7 658.1,341.0 649.1,341.7 640.0,342.0 630.9,341.7 621.9,341.0 613.0,339.7 604.3,338.0 596.0,335.7 588.1,333.0 580.6,329.9 573.6,326.4 567.2,322.5 561.4,318.2 556.3,313.7 551.9,308.9 548.3,303.8 545.5,298.6 543.5,293.2" fill="none" stroke="#4a5868" stroke-width="0.7" stroke-linejoin="round" />
<ellipse cx="641.0" cy="270.0" rx="92.0" ry="55.0" fill="none" stroke="#4a5868" stroke-width="0.7" opacity="0.8" />
<line x1="534.0" y1="258.0" x2="535.0" y2="290.0" stroke="#2b3440" stroke-width="1" />
<line x1="744.0" y1="258.0" x2="745.0" y2="290.0" stroke="#2b3440" stroke-width="1" />
<line x1="639.0" y1="237.0" x2="750.0" y2="189.5" stroke="#56606c" stroke-width="5" />
<line x1="639.0" y1="237.0" x2="750.0" y2="189.5" stroke="#f6f7f8" stroke-width="3.4" />
<defs>
<linearGradient id="gBl1" gradientUnits="userSpaceOnUse" x1="545" y1="260" x2="620" y2="320"><stop offset="0" stop-color="#d2d2d2"/><stop offset="0.5" stop-color="#bdbdbd"/><stop offset="1" stop-color="#8e8e8e"/></linearGradient>
<linearGradient id="gBl2" gradientUnits="userSpaceOnUse" x1="655" y1="280" x2="705" y2="215"><stop offset="0" stop-color="#8a8a8a"/><stop offset="0.6" stop-color="#b5b5b5"/><stop offset="1" stop-color="#cfcfcf"/></linearGradient>
<linearGradient id="gHub" gradientUnits="userSpaceOnUse" x1="627" y1="0" x2="660" y2="0"><stop offset="0" stop-color="#808080"/><stop offset="0.4" stop-color="#595959"/><stop offset="1" stop-color="#3c3c3c"/></linearGradient>
</defs>
<path d="M643 283 Q656 300 666 306 Q690 312 706 320 Q712 326 700 328 Q678 330 660 312 Q648 300 640 290 Z" fill="#8f8f8f" stroke="#3a3a3a" stroke-width="0.8" stroke-linejoin="round" />
<path d="M627 272 L629 306 Q643 314 659 305 L659 272 Z" fill="url(#gHub)" stroke="#222" stroke-width="0.8" stroke-linejoin="round" />
<ellipse cx="643.0" cy="306.0" rx="16.0" ry="6.5" fill="#e9e9e9" stroke="#444" stroke-width="0.7" />
<path d="M627 268 Q585 262 552 256 Q540 258 540 280 Q542 308 556 318 Q596 320 632 304 Z" fill="url(#gBl1)" stroke="#3a3a3a" stroke-width="0.9" stroke-linejoin="round" />
<path d="M652 274 Q656 244 674 232 Q694 220 707 215 Q702 232 684 250 Q668 268 662 284 Z" fill="url(#gBl2)" stroke="#3a3a3a" stroke-width="0.9" stroke-linejoin="round" />
<ellipse cx="643.0" cy="272.0" rx="16.0" ry="7.0" fill="#bdbdbd" stroke="#333" stroke-width="0.8" />
<polygon points="631.0,258.0 655.0,258.0 657.0,270.0 629.0,270.0" fill="#a9a9a9" stroke="#333" stroke-width="0.7" stroke-linejoin="round" />
<ellipse cx="643.0" cy="258.0" rx="12.0" ry="5.0" fill="#d6d6d6" stroke="#333" stroke-width="0.7" />
<polygon points="634.0,246.0 650.0,246.0 652.0,257.0 632.0,257.0" fill="#c2c2c2" stroke="#333" stroke-width="0.7" stroke-linejoin="round" />
<ellipse cx="642.0" cy="246.0" rx="8.0" ry="3.4" fill="#e2e2e2" stroke="#333" stroke-width="0.6" />
<polygon points="637.0,238.0 645.0,238.0 646.0,246.0 636.0,246.0" fill="#e9e9e9" stroke="#444" stroke-width="0.6" stroke-linejoin="round" />
<ellipse cx="640.5" cy="237.0" rx="3.6" ry="2.4" fill="#f4f4f4" stroke="#555" stroke-width="0.6" />
<ellipse cx="330.0" cy="533.0" rx="17.0" ry="22.0" fill="#8d8d99" stroke="#3a3a3a" stroke-width="0.9" transform="rotate(-12 330 533)"/>
<ellipse cx="334.0" cy="534.0" rx="15.5" ry="21.0" fill="#d4d4dc" stroke="#555" stroke-width="0.8" transform="rotate(-12 334 534)"/>
<ellipse cx="336.0" cy="535.0" rx="10.0" ry="14.0" fill="#c2c2cc" stroke="#777" stroke-width="0.6" transform="rotate(-12 336 535)"/>
<ellipse cx="351.0" cy="541.0" rx="7.0" ry="9.0" fill="#8c8c3a" stroke="#4a4a1a" stroke-width="0.7" />
<polygon points="352.0,521.0 392.0,505.0 399.0,510.0 358.0,527.0" fill="#f7f7f9" stroke="#555" stroke-width="0.7" stroke-linejoin="round" />
<polygon points="336.0,514.0 343.0,520.0 344.0,540.0 337.0,536.0" fill="#2b2bb5" stroke="#1a1a70" stroke-width="0.5" stroke-linejoin="round" /><polygon points="320.0,491.0 358.0,474.0 358.5,488.3 352.0,504.0 331.0,521.0 324.0,506.6" fill="#9d9ddf" stroke="#5a5aa8" stroke-width="0.6" stroke-linejoin="round" opacity="0.93" /><polygon points="311.0,486.0 353.0,470.0 360.0,474.0 318.0,491.0" fill="#6f6fe0" stroke="#3a3a9a" stroke-width="0.6" stroke-linejoin="round" /><ellipse cx="315.0" cy="487.2" rx="1.8" ry="1.4" fill="#33338a" stroke="none" stroke-width="1" /><ellipse cx="351.0" cy="472.0" rx="1.8" ry="1.4" fill="#33338a" stroke="none" stroke-width="1" />
<polygon points="338.0,522.0 346.0,528.0 347.0,548.0 339.0,544.0" fill="#2b2bb5" stroke="#1a1a70" stroke-width="0.5" stroke-linejoin="round" /><polygon points="337.0,506.0 377.0,489.0 377.5,503.3 371.0,519.0 348.0,536.0 341.0,521.6" fill="#9d9ddf" stroke="#5a5aa8" stroke-width="0.6" stroke-linejoin="round" opacity="0.93" /><polygon points="329.0,501.0 373.0,484.0 379.0,489.0 335.0,506.0" fill="#6f6fe0" stroke="#3a3a9a" stroke-width="0.6" stroke-linejoin="round" /><ellipse cx="333.0" cy="502.2" rx="1.8" ry="1.4" fill="#33338a" stroke="none" stroke-width="1" /><ellipse cx="371.0" cy="486.0" rx="1.8" ry="1.4" fill="#33338a" stroke="none" stroke-width="1" />
<path d="M372 560 L398 549 L432 584 L432 604 L404 612 L374 584 Z" fill="url(#gMot)" stroke="#2a2a2a" stroke-width="0.7" stroke-linejoin="round" />
<defs><linearGradient id="gMot" gradientUnits="userSpaceOnUse" x1="372" y1="600" x2="430" y2="560"><stop offset="0" stop-color="#2d2d2d"/><stop offset="0.45" stop-color="#6d6d6d"/><stop offset="1" stop-color="#c9c9c9"/></linearGradient>
<linearGradient id="gRed" gradientUnits="userSpaceOnUse" x1="410" y1="615" x2="445" y2="585"><stop offset="0" stop-color="#8a8a8a"/><stop offset="0.5" stop-color="#d8d8d8"/><stop offset="1" stop-color="#f2f2f2"/></linearGradient></defs>
<ellipse cx="388.0" cy="573.0" rx="13.0" ry="17.0" fill="#3a3a3a" stroke="#222" stroke-width="0.6" transform="rotate(-40 388 573)"/>
<path d="M404 590 L426 580 L448 600 L446 614 L424 622 L404 606 Z" fill="url(#gRed)" stroke="#555" stroke-width="0.6" stroke-linejoin="round" />
<ellipse cx="436.0" cy="606.0" rx="9.0" ry="11.0" fill="#ececec" stroke="#666" stroke-width="0.6" />
<polygon points="368.0,548.0 376.0,554.0 377.0,574.0 369.0,570.0" fill="#2b2bb5" stroke="#1a1a70" stroke-width="0.5" stroke-linejoin="round" /><polygon points="366.0,535.0 406.0,519.0 406.5,533.3 400.0,549.0 377.0,565.0 370.0,550.6" fill="#9d9ddf" stroke="#5a5aa8" stroke-width="0.6" stroke-linejoin="round" opacity="0.93" /><polygon points="358.0,530.0 402.0,514.0 408.0,519.0 364.0,535.0" fill="#6f6fe0" stroke="#3a3a9a" stroke-width="0.6" stroke-linejoin="round" /><ellipse cx="362.0" cy="531.2" rx="1.8" ry="1.4" fill="#33338a" stroke="none" stroke-width="1" /><ellipse cx="400.0" cy="516.0" rx="1.8" ry="1.4" fill="#33338a" stroke="none" stroke-width="1" />
<line x1="356.0" y1="579.0" x2="388.0" y2="568.0" stroke="#333" stroke-width="2.4" />
<line x1="356.0" y1="579.0" x2="388.0" y2="568.0" stroke="#ddd" stroke-width="1" />
<ellipse cx="355.0" cy="580.0" rx="2.6" ry="3.6" fill="#e6e6e6" stroke="#444" stroke-width="0.7" />
<ellipse cx="443.0" cy="623.0" rx="11.0" ry="14.0" fill="#8c8c3a" stroke="#4a4a1a" stroke-width="0.7" />
<ellipse cx="446.0" cy="624.0" rx="8.0" ry="11.0" fill="#b9b98a" stroke="#6a6a3a" stroke-width="0.5" />
<polygon points="424.0,606.0 433.0,612.0 434.0,632.0 426.0,628.0" fill="#2b2bb5" stroke="#1a1a70" stroke-width="0.5" stroke-linejoin="round" /><polygon points="420.0,596.0 463.0,578.0 463.5,592.3 457.0,608.0 431.0,626.0 424.0,611.6" fill="#9d9ddf" stroke="#5a5aa8" stroke-width="0.6" stroke-linejoin="round" opacity="0.93" /><polygon points="412.0,590.0 460.0,572.0 465.0,578.0 418.0,596.0" fill="#6f6fe0" stroke="#3a3a9a" stroke-width="0.6" stroke-linejoin="round" /><ellipse cx="416.0" cy="591.2" rx="1.8" ry="1.4" fill="#33338a" stroke="none" stroke-width="1" /><ellipse cx="458.0" cy="574.0" rx="1.8" ry="1.4" fill="#33338a" stroke="none" stroke-width="1" />
<ellipse cx="483.0" cy="668.0" rx="34.0" ry="25.0" fill="#8f8f9a" stroke="#3a3a3a" stroke-width="0.9" transform="rotate(-28 483 668)"/>
<ellipse cx="487.0" cy="667.0" rx="32.0" ry="23.5" fill="#cfcfd9" stroke="#555" stroke-width="0.8" transform="rotate(-28 487 667)"/>
<ellipse cx="489.0" cy="667.0" rx="25.0" ry="18.0" fill="#c3c3cf" stroke="#7a7a86" stroke-width="0.6" transform="rotate(-28 489 667)"/>
<polygon points="476.0,660.0 509.0,648.0 509.0,672.0 498.0,684.0 480.0,684.0" fill="#2b2bb5" stroke="#1a1a70" stroke-width="0.5" stroke-linejoin="round" />
<ellipse cx="498.0" cy="673.0" rx="14.0" ry="15.5" fill="#a1a1b0" stroke="#555" stroke-width="0.7" />
<polygon points="454.0,627.0 494.0,609.0 494.5,623.3 488.0,639.0 465.0,657.0 458.0,642.6" fill="#9d9ddf" stroke="#5a5aa8" stroke-width="0.6" stroke-linejoin="round" opacity="0.93" /><polygon points="447.0,622.0 492.0,605.0 496.0,609.0 452.0,627.0" fill="#6f6fe0" stroke="#3a3a9a" stroke-width="0.6" stroke-linejoin="round" /><ellipse cx="451.0" cy="623.2" rx="1.8" ry="1.4" fill="#33338a" stroke="none" stroke-width="1" /><ellipse cx="490.0" cy="607.0" rx="1.8" ry="1.4" fill="#33338a" stroke="none" stroke-width="1" />
<polygon points="472.0,642.0 510.0,626.0 510.5,640.3 504.0,656.0 483.0,672.0 476.0,657.6" fill="#9d9ddf" stroke="#5a5aa8" stroke-width="0.6" stroke-linejoin="round" opacity="0.93" /><polygon points="466.0,637.0 508.0,621.0 512.0,626.0 470.0,642.0" fill="#6f6fe0" stroke="#3a3a9a" stroke-width="0.6" stroke-linejoin="round" /><ellipse cx="470.0" cy="638.2" rx="1.8" ry="1.4" fill="#33338a" stroke="none" stroke-width="1" /><ellipse cx="506.0" cy="623.0" rx="1.8" ry="1.4" fill="#33338a" stroke="none" stroke-width="1" />
<line x1="303.0" y1="477.0" x2="351.0" y2="408.0" stroke="#3d4652" stroke-width="1.1" />
<line x1="352.0" y1="420.0" x2="420.0" y2="500.0" stroke="#3d4652" stroke-width="1.1" />
<line x1="397.0" y1="548.0" x2="452.0" y2="470.0" stroke="#3d4652" stroke-width="1.1" />
<line x1="452.0" y1="470.0" x2="540.0" y2="568.0" stroke="#3d4652" stroke-width="1.1" />
<line x1="470.0" y1="640.0" x2="548.0" y2="560.0" stroke="#3d4652" stroke-width="1.1" />
<line x1="548.0" y1="560.0" x2="575.0" y2="706.0" stroke="#3d4652" stroke-width="1.1" />
<polyline points="296.0,470.0 347.0,452.0 456.0,566.0 538.0,538.0 560.0,560.0" fill="none" stroke="#3d4652" stroke-width="0.9" stroke-linejoin="round" />
<polyline points="456.0,566.0 545.0,530.0" fill="none" stroke="#55606d" stroke-width="0.7" stroke-linejoin="round" />
<defs><radialGradient id="gEnd"><stop offset="0" stop-color="#f0f0f4"/><stop offset="0.55" stop-color="#cfcfdc"/><stop offset="1" stop-color="#8d8da0"/></radialGradient></defs>
<polygon points="677.0,520.0 746.0,492.0 748.0,548.0 680.0,574.0" fill="#9aa8bf" stroke="#4a5868" stroke-width="0.6" stroke-linejoin="round" opacity="0.85" />
<ellipse cx="776.0" cy="537.0" rx="24.0" ry="26.0" fill="url(#gEnd)" stroke="#444" stroke-width="0.9" />
<ellipse cx="780.0" cy="540.0" rx="13.0" ry="14.0" fill="#b9b9c9" stroke="#666" stroke-width="0.6" />
<path d="M656 562 Q700 584 776 560 L780 568 Q704 596 654 572 Z" fill="#9ba9be" stroke="#55606d" stroke-width="0.6" stroke-linejoin="round" opacity="0.9" />
<path d="M660.0 570.0l1.0 11.0M664.0 571.8l1.0 11.0M668.0 573.6l1.0 11.0M672.0 575.4l1.0 11.0M676.0 577.2l1.0 11.0M680.0 579.0l1.0 11.0M684.0 580.8l1.0 11.0M688.0 582.6l1.0 11.0M692.0 584.4l1.0 11.0M696.0 586.2l1.0 11.0M700.0 588.0l1.0 11.0" fill="none" stroke="#5d6878" stroke-width="1.0" stroke-linejoin="round" />
<path d="M704.0 588.0l1.0 11.0M708.5 586.7l1.0 11.0M712.9 585.4l1.0 11.0M717.4 584.1l1.0 11.0M721.9 582.8l1.0 11.0M726.4 581.5l1.0 11.0M730.8 580.2l1.0 11.0M735.3 578.9l1.0 11.0M739.8 577.6l1.0 11.0M744.2 576.4l1.0 11.0M748.7 575.1l1.0 11.0M753.2 573.8l1.0 11.0M757.6 572.5l1.0 11.0M762.1 571.2l1.0 11.0M766.6 569.9l1.0 11.0M771.1 568.6l1.0 11.0M775.5 567.3l1.0 11.0M780.0 566.0l1.0 11.0" fill="none" stroke="#5d6878" stroke-width="1.0" stroke-linejoin="round" />
<ellipse cx="612.0" cy="637.0" rx="21.0" ry="20.0" fill="#6589c9" stroke="#3a4a66" stroke-width="0.9" />
<ellipse cx="613.0" cy="637.0" rx="15.0" ry="14.0" fill="#a9abce" stroke="#5a6a99" stroke-width="0.6" />
<polygon points="609.0,632.0 616.0,631.0 617.0,639.0 610.0,640.0" fill="#eef0f6" stroke="#7a86a0" stroke-width="0.5" stroke-linejoin="round" />
<ellipse cx="923.0" cy="500.0" rx="20.0" ry="22.0" fill="#6589c9" stroke="#3a4a66" stroke-width="0.9" />
<ellipse cx="924.0" cy="500.0" rx="14.0" ry="16.0" fill="#a9abce" stroke="#5a6a99" stroke-width="0.6" />
<polygon points="920.0,495.0 927.0,494.0 928.0,502.0 921.0,503.0" fill="#eef0f6" stroke="#7a86a0" stroke-width="0.5" stroke-linejoin="round" />
<line x1="783.0" y1="540.0" x2="629.0" y2="644.0" stroke="#43474d" stroke-width="4" />
<line x1="783.0" y1="540.0" x2="629.0" y2="644.0" stroke="#b4b8bf" stroke-width="1.8" />
<line x1="796.0" y1="558.0" x2="662.0" y2="661.0" stroke="#43474d" stroke-width="4" />
<line x1="796.0" y1="558.0" x2="662.0" y2="661.0" stroke="#b4b8bf" stroke-width="1.8" />
<line x1="789.0" y1="539.0" x2="950.0" y2="513.0" stroke="#43474d" stroke-width="4" />
<line x1="789.0" y1="539.0" x2="950.0" y2="513.0" stroke="#b4b8bf" stroke-width="1.8" />
<line x1="792.0" y1="560.0" x2="948.0" y2="560.0" stroke="#43474d" stroke-width="4" />
<line x1="792.0" y1="560.0" x2="948.0" y2="560.0" stroke="#b4b8bf" stroke-width="1.8" />
<ellipse cx="633.5" cy="660.0" rx="19.5" ry="20.0" fill="#4a4d50" stroke="#2a2c2e" stroke-width="0.8" /><ellipse cx="635.5" cy="661.5" rx="20.5" ry="21.0" fill="#9a9da0" stroke="#2a2c2e" stroke-width="0.6" /><ellipse cx="638.0" cy="663.2" rx="22.5" ry="23.0" fill="#6e7230" stroke="#3f421a" stroke-width="0.8" /><ellipse cx="640.5" cy="665.0" rx="22.5" ry="23.0" fill="#8a8e42" stroke="#3f421a" stroke-width="1" /><ellipse cx="640.5" cy="665.0" rx="17.5" ry="18.0" fill="#7d8238" stroke="#c4c88a" stroke-width="1.3" /><ellipse cx="648.9" cy="672.4" rx="3.4" ry="3.0" fill="#e6e8ea" stroke="#3f421a" stroke-width="0.5" /><ellipse cx="633.4" cy="673.8" rx="3.4" ry="3.0" fill="#e6e8ea" stroke="#3f421a" stroke-width="0.5" /><ellipse cx="632.1" cy="657.6" rx="3.4" ry="3.0" fill="#e6e8ea" stroke="#3f421a" stroke-width="0.5" /><ellipse cx="647.6" cy="656.2" rx="3.4" ry="3.0" fill="#e6e8ea" stroke="#3f421a" stroke-width="0.5" /><ellipse cx="640.5" cy="665.0" rx="4.6" ry="4.6" fill="#c6c996" stroke="#3f421a" stroke-width="0.6" /><ellipse cx="640.5" cy="665.0" rx="2.0" ry="2.0" fill="#8a8a8a" stroke="#333" stroke-width="0.5" />
<ellipse cx="946.0" cy="532.0" rx="21.0" ry="19.0" fill="#4a4d50" stroke="#2a2c2e" stroke-width="0.8" /><ellipse cx="948.0" cy="533.5" rx="22.0" ry="20.0" fill="#9a9da0" stroke="#2a2c2e" stroke-width="0.6" /><ellipse cx="950.5" cy="535.2" rx="24.0" ry="22.0" fill="#6e7230" stroke="#3f421a" stroke-width="0.8" /><ellipse cx="953.0" cy="537.0" rx="24.0" ry="22.0" fill="#8a8e42" stroke="#3f421a" stroke-width="1" /><ellipse cx="953.0" cy="537.0" rx="19.0" ry="17.0" fill="#7d8238" stroke="#c4c88a" stroke-width="1.3" /><ellipse cx="962.6" cy="543.7" rx="3.4" ry="3.0" fill="#e6e8ea" stroke="#3f421a" stroke-width="0.5" /><ellipse cx="945.0" cy="545.0" rx="3.4" ry="3.0" fill="#e6e8ea" stroke="#3f421a" stroke-width="0.5" /><ellipse cx="943.4" cy="530.3" rx="3.4" ry="3.0" fill="#e6e8ea" stroke="#3f421a" stroke-width="0.5" /><ellipse cx="961.0" cy="529.0" rx="3.4" ry="3.0" fill="#e6e8ea" stroke="#3f421a" stroke-width="0.5" /><ellipse cx="953.0" cy="537.0" rx="4.6" ry="4.6" fill="#c6c996" stroke="#3f421a" stroke-width="0.6" /><ellipse cx="953.0" cy="537.0" rx="2.0" ry="2.0" fill="#8a8a8a" stroke="#333" stroke-width="0.5" />
<ellipse cx="789.0" cy="549.0" rx="10.5" ry="10.5" fill="#8e8e3c" stroke="#4f4f1c" stroke-width="0.8" />
<ellipse cx="789.0" cy="549.0" rx="6.0" ry="6.0" fill="#b4b476" stroke="#4f4f1c" stroke-width="0.5" />
<ellipse cx="789.0" cy="549.0" rx="2.5" ry="2.5" fill="#ddd" stroke="#444" stroke-width="0.5" />
<line x1="248.0" y1="775.0" x2="241.0" y2="764.0" stroke="#d62222" stroke-width="2.6" />
<polygon points="238.0,766.5 244.0,762.5 238.5,758.5" fill="#d62222" stroke="none" stroke-width="1" stroke-linejoin="round" />
<line x1="248.0" y1="775.0" x2="234.0" y2="781.0" stroke="#2222cc" stroke-width="2.6" />
<polygon points="234.5,777.5 236.0,784.5 228.5,783.5" fill="#2222cc" stroke="none" stroke-width="1" stroke-linejoin="round" />
<line x1="248.0" y1="775.0" x2="251.5" y2="789.0" stroke="#22aa22" stroke-width="2.8" />
<polygon points="248.0,788.5 255.0,787.0 253.0,796.0" fill="#22aa22" stroke="none" stroke-width="1" stroke-linejoin="round" />
<text x="233.5" y="759" font-size="7" fill="#d62222" font-family="Liberation Sans, sans-serif">x</text><text x="222" y="785" font-size="7" fill="#2222cc" font-family="Liberation Sans, sans-serif">z</text>
</svg>
</div>
</body>
</html>
